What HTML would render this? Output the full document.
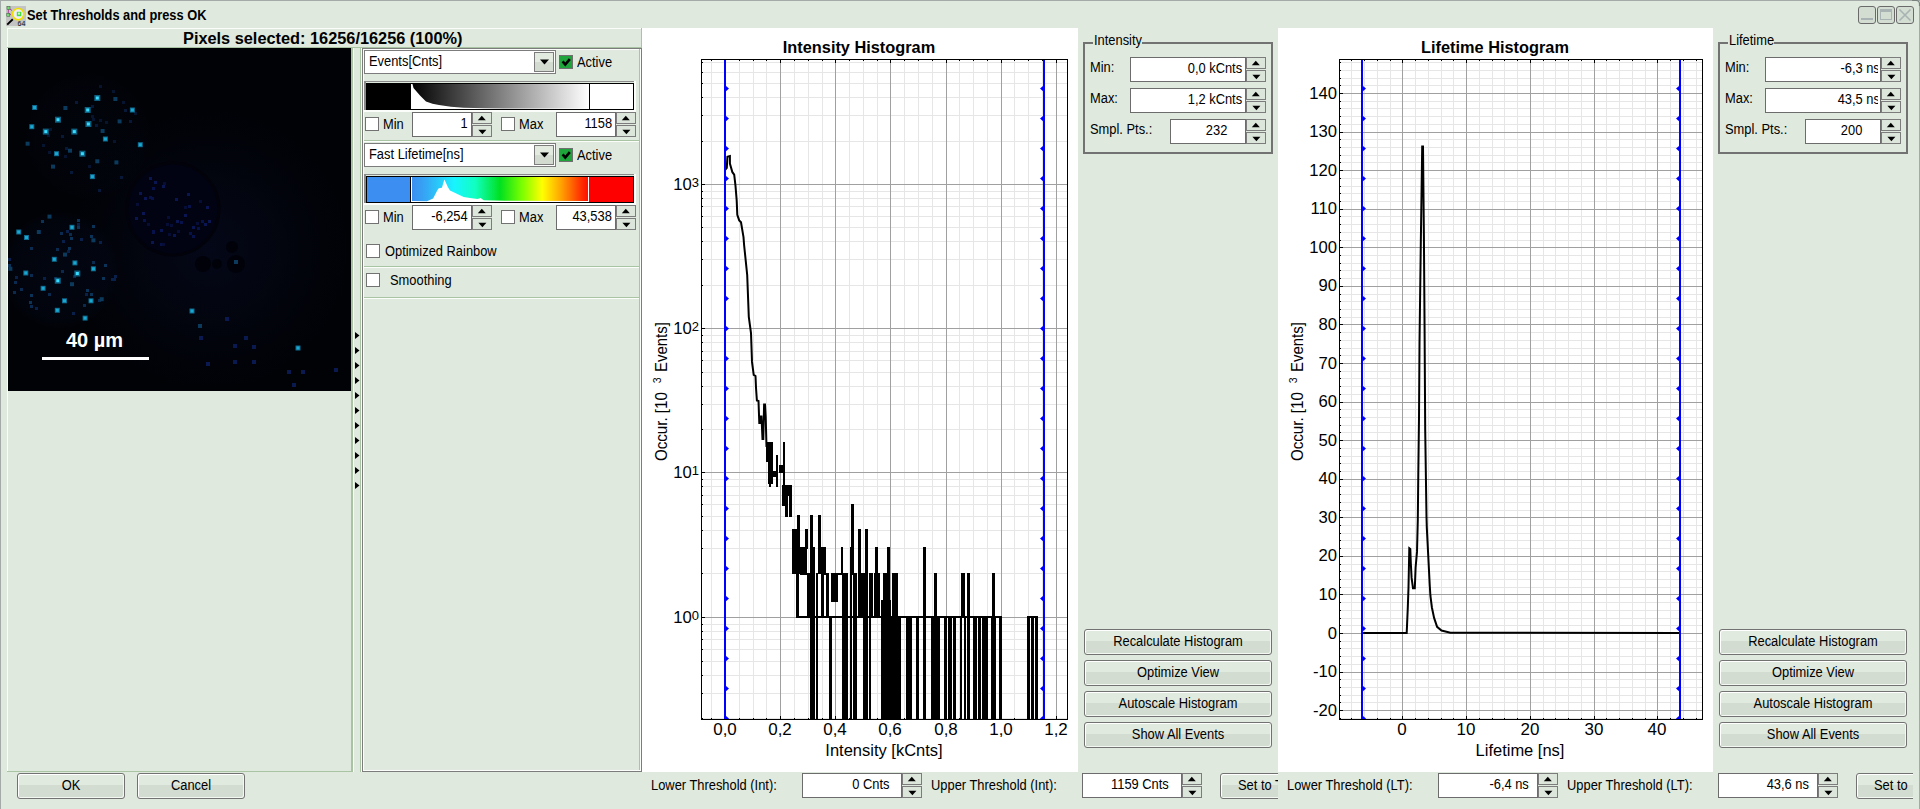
<!DOCTYPE html><html><head><meta charset="utf-8"><style>
html,body{margin:0;padding:0;width:1920px;height:809px;overflow:hidden;background:#dfe9de;font-family:'Liberation Sans', sans-serif;}
body{position:relative}
</style></head><body>
<div style="position:absolute;left:0px;top:0px;width:1920px;height:1px;background:#a3aaa7;"></div>
<div style="position:absolute;left:0px;top:0px;width:1px;height:809px;background:#a3aaa7;"></div>
<div style="position:absolute;left:1919px;top:4px;width:1px;height:805px;background:#a3aaa7;"></div>
<svg style="position:absolute;left:1912px;top:0" width="8" height="6"><path d="M0 0.5 H4 Q7.5 0.5 7.5 4 V6" stroke="#7a8280" stroke-width="1.2" fill="none"/></svg>
<svg style="position:absolute;left:6px;top:6px" width="20" height="20" viewBox="0 0 20 20">
<rect x="0" y="0" width="20" height="20" fill="#c4c4c4"/>
<path d="M2.5 2 L2.2 8.8 M2.5 2 L6 4.5 M2.2 8.8 L5 8.4 M7.6 10.3 L12.5 7.8" stroke="#b0309a" stroke-width="0.9" fill="none"/>
<rect x="1" y="0.6" width="3" height="3" fill="#70e070" stroke="#3a5a3a" stroke-width="0.5"/>
<rect x="0.8" y="7.3" width="3" height="3" fill="#70e070" stroke="#3a5a3a" stroke-width="0.5"/>
<line x1="1.2" y1="18.6" x2="6.8" y2="13.2" stroke="#000" stroke-width="1.9"/>
<circle cx="12.2" cy="8.1" r="5.6" fill="#f0eef4" stroke="#f0e000" stroke-width="1.6"/>
<rect x="10.8" y="5.8" width="4.4" height="4.4" fill="#40e040"/>
<rect x="12" y="6.6" width="2" height="2" fill="#c8f8c8"/>
<text x="11.6" y="19.8" font-size="7" font-family="Liberation Sans" fill="#111">64</text>
</svg>
<div style="position:absolute;left:27px;top:7.00px;white-space:pre;line-height:1;font:bold 14px 'Liberation Sans', sans-serif;color:#000;transform:scaleX(0.915);transform-origin:0 0;">Set Thresholds and press OK</div>
<div style="position:absolute;left:1858px;top:6px;width:18px;height:18px;box-sizing:border-box;border:1.5px solid #6a6a6a;border-radius:3px;background:#d3ddd1;"></div>
<div style="position:absolute;left:1877px;top:6px;width:18px;height:18px;box-sizing:border-box;border:1.5px solid #6a6a6a;border-radius:3px;background:#d3ddd1;"></div>
<div style="position:absolute;left:1896px;top:6px;width:18px;height:18px;box-sizing:border-box;border:1.5px solid #6a6a6a;border-radius:3px;background:#d3ddd1;"></div>
<div style="position:absolute;left:1861px;top:18px;width:12px;height:2px;background:#a9b3b3;"></div>
<div style="position:absolute;left:1880px;top:9px;width:12px;height:11px;box-sizing:border-box;border:1px solid #a9b3b3;border-top-width:3px;"></div>
<svg style="position:absolute;left:1896px;top:6px" width="18" height="18"><path d="M3.5 3.5 L14.5 14.5 M14.5 3.5 L3.5 14.5" stroke="#a9b3b3" stroke-width="1.6"/></svg>
<div style="position:absolute;left:7px;top:28px;width:634px;height:1px;background:#fbfdfb;"></div>
<div style="position:absolute;left:7px;top:28px;width:1px;height:20px;background:#fbfdfb;"></div>
<div style="position:absolute;left:7px;top:47px;width:635px;height:1px;background:#a9c4a2;"></div>
<div style="position:absolute;left:641px;top:28px;width:1px;height:20px;background:#a9c4a2;"></div>
<div style="position:absolute;left:183px;top:30.29px;white-space:pre;line-height:1;font:bold 16px 'Liberation Sans', sans-serif;color:#000;transform:scaleX(1.02);transform-origin:0 0;">Pixels selected: 16256/16256 (100%)</div>
<div style="position:absolute;left:351px;top:48px;width:2px;height:724px;background:#a9c4a2;"></div>
<div style="position:absolute;left:7px;top:771px;width:346px;height:1px;background:#a9c4a2;"></div>
<div style="position:absolute;left:7px;top:48px;width:1px;height:723px;background:#fbfdfb;"></div>
<svg style="position:absolute;left:8px;top:48px" width="343" height="343">
<defs><radialGradient id="g1" cx="0.5" cy="0.5" r="0.5"><stop offset="0" stop-color="#040717"/><stop offset="1" stop-color="#010206"/></radialGradient><radialGradient id="g2" cx="0.5" cy="0.5" r="0.5"><stop offset="0" stop-color="#06102a"/><stop offset="0.85" stop-color="#040a1c"/><stop offset="1" stop-color="#02040c"/></radialGradient></defs>
<rect width="343" height="343" fill="#010206"/>
<rect x="60" y="60" width="283" height="283" fill="url(#g1)"/>
<circle cx="80" cy="88" r="62" fill="url(#g2)" opacity="0.15"/>
<circle cx="52" cy="222" r="58" fill="url(#g2)" opacity="0.3"/>
<circle cx="165" cy="161" r="46" fill="#020312" stroke="#01020a" stroke-width="3"/>
<circle cx="195" cy="216" r="8" fill="#010209"/>
<circle cx="228" cy="216" r="9" fill="#010209"/>
<circle cx="224" cy="199" r="6" fill="#010209"/>
<circle cx="209" cy="216" r="5" fill="#010209"/>
<rect x="158" y="175" width="3" height="3" fill="#060e38"/>
<rect x="200" y="172" width="3" height="3" fill="#08124a"/>
<rect x="159" y="168" width="3" height="3" fill="#060e38"/>
<rect x="168" y="172" width="3" height="3" fill="#0a1652"/>
<rect x="176" y="166" width="3" height="3" fill="#0a1652"/>
<rect x="193" y="172" width="3" height="3" fill="#08124a"/>
<rect x="144" y="139" width="3" height="3" fill="#08124a"/>
<rect x="143" y="149" width="3" height="3" fill="#08124a"/>
<rect x="200" y="172" width="3" height="3" fill="#0a1652"/>
<rect x="139" y="175" width="3" height="3" fill="#060e38"/>
<rect x="152" y="195" width="3" height="3" fill="#08124a"/>
<rect x="189" y="179" width="3" height="3" fill="#08124a"/>
<rect x="144" y="182" width="3" height="3" fill="#08124a"/>
<rect x="136" y="149" width="3" height="3" fill="#0a1652"/>
<rect x="154" y="137" width="3" height="3" fill="#0a1652"/>
<rect x="127" y="169" width="3" height="3" fill="#0a1652"/>
<rect x="154" y="195" width="3" height="3" fill="#060e38"/>
<rect x="167" y="150" width="3" height="3" fill="#0a1652"/>
<rect x="128" y="155" width="3" height="3" fill="#060e38"/>
<rect x="135" y="171" width="3" height="3" fill="#08124a"/>
<rect x="184" y="178" width="3" height="3" fill="#0a1652"/>
<rect x="181" y="184" width="3" height="3" fill="#08124a"/>
<rect x="176" y="158" width="3" height="3" fill="#060e38"/>
<rect x="131" y="144" width="3" height="3" fill="#0a1652"/>
<rect x="152" y="181" width="3" height="3" fill="#0a1652"/>
<rect x="141" y="148" width="3" height="3" fill="#08124a"/>
<rect x="191" y="152" width="3" height="3" fill="#060e38"/>
<rect x="196" y="175" width="3" height="3" fill="#0a1652"/>
<rect x="141" y="129" width="3" height="3" fill="#0a1652"/>
<rect x="160" y="185" width="3" height="3" fill="#060e38"/>
<rect x="143" y="193" width="3" height="3" fill="#0a1652"/>
<rect x="172" y="173" width="3" height="3" fill="#08124a"/>
<rect x="169" y="182" width="3" height="3" fill="#060e38"/>
<rect x="165" y="186" width="3" height="3" fill="#0a1652"/>
<rect x="188" y="174" width="3" height="3" fill="#060e38"/>
<rect x="162" y="176" width="3" height="3" fill="#0a1652"/>
<rect x="179" y="145" width="3" height="3" fill="#0a1652"/>
<rect x="198" y="158" width="3" height="3" fill="#0a1652"/>
<rect x="180" y="157" width="3" height="3" fill="#08124a"/>
<rect x="184" y="187" width="3" height="3" fill="#08124a"/>
<rect x="134" y="164" width="3" height="3" fill="#0a1652"/>
<rect x="162" y="176" width="3" height="3" fill="#060e38"/>
<rect x="144" y="183" width="3" height="3" fill="#08124a"/>
<rect x="155" y="134" width="3" height="3" fill="#060e38"/>
<rect x="146" y="133" width="3" height="3" fill="#0a1652"/>
<rect x="91" y="193" width="3" height="3" fill="#08204a"/>
<rect x="62" y="189" width="3" height="3" fill="#0b3358"/>
<rect x="22" y="246" width="3" height="3" fill="#0b3358"/>
<rect x="65" y="227" width="3" height="3" fill="#0a2a50"/>
<rect x="35" y="229" width="3" height="3" fill="#08204a"/>
<rect x="53" y="222" width="3" height="3" fill="#0a2a50"/>
<rect x="-0" y="210" width="3" height="3" fill="#08204a"/>
<rect x="103" y="230" width="3" height="3" fill="#08204a"/>
<rect x="21" y="253" width="3" height="3" fill="#0b3358"/>
<rect x="22" y="199" width="3" height="3" fill="#0a2a50"/>
<rect x="84" y="177" width="3" height="3" fill="#0b3358"/>
<rect x="22" y="226" width="3" height="3" fill="#0a2a50"/>
<rect x="78" y="241" width="3" height="3" fill="#0b3358"/>
<rect x="7" y="228" width="3" height="3" fill="#08204a"/>
<rect x="105" y="230" width="3" height="3" fill="#08204a"/>
<rect x="22" y="257" width="3" height="3" fill="#0a2a50"/>
<rect x="54" y="192" width="3" height="3" fill="#08204a"/>
<rect x="82" y="187" width="3" height="3" fill="#0b3358"/>
<rect x="-0" y="216" width="3" height="3" fill="#0b3358"/>
<rect x="58" y="182" width="3" height="3" fill="#08204a"/>
<rect x="40" y="245" width="3" height="3" fill="#0a2a50"/>
<rect x="69" y="175" width="3" height="3" fill="#08204a"/>
<rect x="60" y="199" width="3" height="3" fill="#0b3358"/>
<rect x="46" y="229" width="3" height="3" fill="#0a2a50"/>
<rect x="61" y="185" width="3" height="3" fill="#0a2a50"/>
<rect x="33" y="172" width="3" height="3" fill="#0b3358"/>
<rect x="69" y="178" width="3" height="3" fill="#0b3358"/>
<rect x="84" y="213" width="3" height="3" fill="#0a2a50"/>
<rect x="82" y="245" width="3" height="3" fill="#0b3358"/>
<rect x="64" y="264" width="3" height="3" fill="#08204a"/>
<rect x="72" y="190" width="3" height="3" fill="#08204a"/>
<rect x="27" y="259" width="3" height="3" fill="#08204a"/>
<rect x="77" y="245" width="3" height="3" fill="#08204a"/>
<rect x="52" y="184" width="3" height="3" fill="#0a2a50"/>
<rect x="12" y="240" width="3" height="3" fill="#0a2a50"/>
<rect x="69" y="171" width="3" height="3" fill="#0b3358"/>
<rect x="6" y="233" width="3" height="3" fill="#0a2a50"/>
<rect x="48" y="200" width="3" height="3" fill="#0a2a50"/>
<rect x="94" y="229" width="3" height="3" fill="#0b3358"/>
<rect x="59" y="202" width="3" height="3" fill="#08204a"/>
<rect x="96" y="216" width="3" height="3" fill="#0b3358"/>
<rect x="75" y="256" width="3" height="3" fill="#0a2a50"/>
<rect x="106" y="227" width="3" height="3" fill="#08204a"/>
<rect x="90" y="251" width="3" height="3" fill="#0a2a50"/>
<rect x="5" y="243" width="3" height="3" fill="#0a2a50"/>
<rect x="105" y="92" width="3" height="3" fill="#061430"/>
<rect x="83" y="57" width="3" height="3" fill="#081838"/>
<rect x="87" y="76" width="3" height="3" fill="#081838"/>
<rect x="116" y="61" width="3" height="3" fill="#081838"/>
<rect x="104" y="42" width="3" height="3" fill="#061430"/>
<rect x="41" y="80" width="3" height="3" fill="#061430"/>
<rect x="114" y="53" width="3" height="3" fill="#061430"/>
<rect x="83" y="67" width="3" height="3" fill="#061430"/>
<rect x="34" y="96" width="3" height="3" fill="#061430"/>
<rect x="62" y="123" width="3" height="3" fill="#081838"/>
<rect x="84" y="70" width="3" height="3" fill="#061430"/>
<rect x="80" y="117" width="3" height="3" fill="#061430"/>
<rect x="39" y="86" width="3" height="3" fill="#061430"/>
<rect x="40" y="103" width="3" height="3" fill="#061430"/>
<rect x="67" y="53" width="3" height="3" fill="#081838"/>
<rect x="53" y="87" width="3" height="3" fill="#081838"/>
<rect x="126" y="64" width="3" height="3" fill="#061430"/>
<rect x="91" y="71" width="3" height="3" fill="#061430"/>
<rect x="56" y="107" width="3" height="3" fill="#061430"/>
<rect x="57" y="99" width="3" height="3" fill="#081838"/>
<rect x="91" y="37" width="3" height="3" fill="#061430"/>
<rect x="121" y="72" width="3" height="3" fill="#081838"/>
<rect x="112" y="128" width="3" height="3" fill="#081838"/>
<rect x="90" y="141" width="3" height="3" fill="#081838"/>
<rect x="97" y="73" width="3" height="3" fill="#061430"/>
<rect x="225" y="296" width="4" height="4" fill="#0a1a50"/>
<rect x="236" y="288" width="4" height="4" fill="#0a1a50"/>
<rect x="217" y="269" width="4" height="4" fill="#0a1a50"/>
<rect x="191" y="288" width="4" height="4" fill="#0a1a50"/>
<rect x="198" y="314" width="4" height="4" fill="#0a1a50"/>
<rect x="225" y="312" width="4" height="4" fill="#0a1a50"/>
<rect x="244" y="312" width="4" height="4" fill="#0a1a50"/>
<rect x="279" y="322" width="4" height="4" fill="#0a1a50"/>
<rect x="293" y="322" width="4" height="4" fill="#0a1a50"/>
<rect x="326" y="320" width="4" height="4" fill="#0a1a50"/>
<rect x="284" y="335" width="4" height="4" fill="#0a1a50"/>
<rect x="244" y="297" width="4" height="4" fill="#0a1a50"/>
<rect x="86.3" y="47.0" width="6" height="6" fill="#0d5f80"/>
<rect x="87.8" y="48.5" width="3" height="3" fill="#38dcff"/>
<rect x="105.4" y="49.0" width="4" height="4" fill="#0b3a5c"/>
<rect x="24.1" y="57.0" width="5" height="5" fill="#0e6a90"/>
<rect x="25.1" y="58.0" width="3" height="3" fill="#1aa8d0"/>
<rect x="55.4" y="58.0" width="4" height="4" fill="#0b3a5c"/>
<rect x="76.7" y="59.0" width="6" height="6" fill="#0d5f80"/>
<rect x="78.2" y="60.5" width="3" height="3" fill="#38dcff"/>
<rect x="121.9" y="59.5" width="5" height="5" fill="#0e6a90"/>
<rect x="122.9" y="60.5" width="3" height="3" fill="#1aa8d0"/>
<rect x="47.0" y="68.7" width="6" height="6" fill="#0d5f80"/>
<rect x="48.5" y="70.2" width="3" height="3" fill="#38dcff"/>
<rect x="77.4" y="73.0" width="6" height="6" fill="#0d5f80"/>
<rect x="78.9" y="74.5" width="3" height="3" fill="#38dcff"/>
<rect x="109.6" y="71.4" width="4" height="4" fill="#0b3a5c"/>
<rect x="21.3" y="76.2" width="5" height="5" fill="#0e6a90"/>
<rect x="22.3" y="77.2" width="3" height="3" fill="#1aa8d0"/>
<rect x="34.8" y="80.6" width="6" height="6" fill="#0d5f80"/>
<rect x="36.3" y="82.1" width="3" height="3" fill="#38dcff"/>
<rect x="63.3" y="80.6" width="6" height="6" fill="#0d5f80"/>
<rect x="64.8" y="82.1" width="3" height="3" fill="#38dcff"/>
<rect x="92.6" y="81.0" width="4" height="4" fill="#0b3a5c"/>
<rect x="94.9" y="88.5" width="5" height="5" fill="#0e6a90"/>
<rect x="95.9" y="89.5" width="3" height="3" fill="#1aa8d0"/>
<rect x="17.6" y="93.7" width="4" height="4" fill="#0b3a5c"/>
<rect x="129.8" y="94.2" width="5" height="5" fill="#0e6a90"/>
<rect x="130.8" y="95.2" width="3" height="3" fill="#1aa8d0"/>
<rect x="46.0" y="103.2" width="5" height="5" fill="#0e6a90"/>
<rect x="47.0" y="104.2" width="3" height="3" fill="#1aa8d0"/>
<rect x="60.0" y="100.7" width="4" height="4" fill="#0b3a5c"/>
<rect x="71.4" y="102.7" width="6" height="6" fill="#0d5f80"/>
<rect x="72.9" y="104.2" width="3" height="3" fill="#38dcff"/>
<rect x="87.3" y="111.3" width="4" height="4" fill="#0b3a5c"/>
<rect x="106.4" y="112.4" width="4" height="4" fill="#0b3a5c"/>
<rect x="43.0" y="116.6" width="4" height="4" fill="#0b3a5c"/>
<rect x="81.9" y="126.1" width="5" height="5" fill="#0e6a90"/>
<rect x="82.9" y="127.1" width="3" height="3" fill="#1aa8d0"/>
<rect x="8.2" y="181.5" width="5" height="5" fill="#0e6a90"/>
<rect x="9.2" y="182.5" width="3" height="3" fill="#1aa8d0"/>
<rect x="16.0" y="187.0" width="5" height="5" fill="#0e6a90"/>
<rect x="17.0" y="188.0" width="3" height="3" fill="#1aa8d0"/>
<rect x="61.5" y="176.8" width="5" height="5" fill="#0e6a90"/>
<rect x="62.5" y="177.8" width="3" height="3" fill="#1aa8d0"/>
<rect x="39.5" y="166.6" width="4" height="4" fill="#0b3a5c"/>
<rect x="28.8" y="182.0" width="4" height="4" fill="#0b3a5c"/>
<rect x="83.4" y="190.3" width="4" height="4" fill="#0b3a5c"/>
<rect x="43.8" y="208.8" width="5" height="5" fill="#0e6a90"/>
<rect x="44.8" y="209.8" width="3" height="3" fill="#1aa8d0"/>
<rect x="64.4" y="212.4" width="5" height="5" fill="#0e6a90"/>
<rect x="65.4" y="213.4" width="3" height="3" fill="#1aa8d0"/>
<rect x="82.9" y="218.3" width="5" height="5" fill="#0e6a90"/>
<rect x="83.9" y="219.3" width="3" height="3" fill="#1aa8d0"/>
<rect x="0.4" y="218.8" width="4" height="4" fill="#0b3a5c"/>
<rect x="15.3" y="222.5" width="5" height="5" fill="#0e6a90"/>
<rect x="16.3" y="223.5" width="3" height="3" fill="#1aa8d0"/>
<rect x="66.3" y="222.5" width="6" height="6" fill="#0d5f80"/>
<rect x="67.8" y="224.0" width="3" height="3" fill="#38dcff"/>
<rect x="46.8" y="229.7" width="6" height="6" fill="#0d5f80"/>
<rect x="48.3" y="231.2" width="3" height="3" fill="#38dcff"/>
<rect x="32.6" y="237.8" width="5" height="5" fill="#0e6a90"/>
<rect x="33.6" y="238.8" width="3" height="3" fill="#1aa8d0"/>
<rect x="62.0" y="234.2" width="4" height="4" fill="#0b3a5c"/>
<rect x="54.0" y="250.3" width="5" height="5" fill="#0e6a90"/>
<rect x="55.0" y="251.3" width="3" height="3" fill="#1aa8d0"/>
<rect x="80.5" y="250.3" width="5" height="5" fill="#0e6a90"/>
<rect x="81.5" y="251.3" width="3" height="3" fill="#1aa8d0"/>
<rect x="91.7" y="249.2" width="4" height="4" fill="#0b3a5c"/>
<rect x="46.8" y="259.8" width="5" height="5" fill="#0e6a90"/>
<rect x="47.8" y="260.8" width="3" height="3" fill="#1aa8d0"/>
<rect x="74.6" y="267.6" width="5" height="5" fill="#0e6a90"/>
<rect x="75.6" y="268.6" width="3" height="3" fill="#1aa8d0"/>
<rect x="55.0" y="204.6" width="4" height="4" fill="#0b3a5c"/>
<rect x="181.5" y="260.5" width="5" height="5" fill="#0e6a90"/>
<rect x="182.5" y="261.5" width="3" height="3" fill="#1aa8d0"/>
<rect x="287.5" y="297.5" width="5" height="5" fill="#0e6a90"/>
<rect x="288.5" y="298.5" width="3" height="3" fill="#1aa8d0"/>
<rect x="226.0" y="212.0" width="4" height="4" fill="#0b3a5c"/>
<rect x="190.0" y="276.0" width="4" height="4" fill="#0b3a5c"/>
</svg>
<div style="position:absolute;left:66px;top:329.36px;white-space:pre;line-height:1;font:bold 20px 'Liberation Sans', sans-serif;color:#fff;transform:scaleX(1.0);transform-origin:0 0;">40 µm</div>
<div style="position:absolute;left:42px;top:357px;width:107px;height:3px;background:#fff;"></div>
<div style="position:absolute;left:353px;top:48px;width:1px;height:724px;background:#fbfdfb;"></div>
<div style="position:absolute;left:360px;top:48px;width:1px;height:724px;background:#a9c4a2;"></div>
<div style="position:absolute;left:361px;top:48px;width:1px;height:724px;background:#fbfdfb;"></div>
<div style="position:absolute;left:362px;top:48px;width:1px;height:724px;background:#7c7c7c;"></div>
<div style="position:absolute;left:363px;top:49px;width:1px;height:722px;background:#fbfdfb;"></div>
<svg style="position:absolute;left:355px;top:332px" width="5" height="8"><path d="M0 0 L4.5 3.5 L0 7 Z" fill="#000"/></svg>
<svg style="position:absolute;left:355px;top:347px" width="5" height="8"><path d="M0 0 L4.5 3.5 L0 7 Z" fill="#000"/></svg>
<svg style="position:absolute;left:355px;top:362px" width="5" height="8"><path d="M0 0 L4.5 3.5 L0 7 Z" fill="#000"/></svg>
<svg style="position:absolute;left:355px;top:377px" width="5" height="8"><path d="M0 0 L4.5 3.5 L0 7 Z" fill="#000"/></svg>
<svg style="position:absolute;left:355px;top:392px" width="5" height="8"><path d="M0 0 L4.5 3.5 L0 7 Z" fill="#000"/></svg>
<svg style="position:absolute;left:355px;top:407px" width="5" height="8"><path d="M0 0 L4.5 3.5 L0 7 Z" fill="#000"/></svg>
<svg style="position:absolute;left:355px;top:422px" width="5" height="8"><path d="M0 0 L4.5 3.5 L0 7 Z" fill="#000"/></svg>
<svg style="position:absolute;left:355px;top:437px" width="5" height="8"><path d="M0 0 L4.5 3.5 L0 7 Z" fill="#000"/></svg>
<svg style="position:absolute;left:355px;top:452px" width="5" height="8"><path d="M0 0 L4.5 3.5 L0 7 Z" fill="#000"/></svg>
<svg style="position:absolute;left:355px;top:467px" width="5" height="8"><path d="M0 0 L4.5 3.5 L0 7 Z" fill="#000"/></svg>
<svg style="position:absolute;left:355px;top:482px" width="5" height="8"><path d="M0 0 L4.5 3.5 L0 7 Z" fill="#000"/></svg>
<div style="position:absolute;left:362px;top:48px;width:280px;height:1px;background:#7c7c7c;"></div>
<div style="position:absolute;left:363px;top:49px;width:278px;height:1px;background:#fbfdfb;"></div>
<div style="position:absolute;left:639px;top:49px;width:1px;height:722px;background:#a9c4a2;"></div>
<div style="position:absolute;left:641px;top:48px;width:1px;height:724px;background:#7c7c7c;"></div>
<div style="position:absolute;left:640px;top:49px;width:1px;height:722px;background:#fbfdfb;"></div>
<div style="position:absolute;left:362px;top:771px;width:280px;height:1px;background:#7c7c7c;"></div>
<div style="position:absolute;left:363px;top:770px;width:278px;height:1px;background:#fbfdfb;"></div>
<div style="position:absolute;left:364px;top:50px;width:192px;height:24px;box-sizing:border-box;border:1px solid #7c7c7c;background:#fff;"></div>
<div style="position:absolute;left:369px;top:53.00px;white-space:pre;line-height:1;font:normal 14px 'Liberation Sans', sans-serif;color:#000;transform:scaleX(0.92);transform-origin:0 0;">Events[Cnts]</div>
<div style="position:absolute;left:534px;top:52px;width:20px;height:20px;box-sizing:border-box;border:1px solid #7c7c7c;background:linear-gradient(#e3ebe1 0,#e3ebe1 50%,#d3dbd1 50%);"></div>
<svg style="position:absolute;left:534px;top:52px" width="20" height="20"><path d="M6 7.5 L15 7.5 L10.5 12.5 Z" fill="#000"/></svg>
<div style="position:absolute;left:559px;top:55px;width:14px;height:14px;box-sizing:border-box;border:1px solid #6f6f6f;background:#1fa33b;"></div>
<svg style="position:absolute;left:559px;top:55px" width="14" height="14"><path d="M3.6 6.4 L6.3 9.6 L10.8 4.2" stroke="#000" stroke-width="2.6" fill="none"/></svg>
<div style="position:absolute;left:577px;top:54.00px;white-space:pre;line-height:1;font:normal 14px 'Liberation Sans', sans-serif;color:#000;transform:scaleX(0.92);transform-origin:0 0;">Active</div>
<svg style="position:absolute;left:364px;top:81px" width="272" height="31">
<defs><linearGradient id="gr" x1="0" x2="1"><stop offset="0" stop-color="#000"/><stop offset="1" stop-color="#fff"/></linearGradient></defs>
<rect x="0" y="0" width="270" height="1" fill="#8a8a8a"/>
<rect x="0" y="0" width="2" height="29" fill="#8a8a8a"/>
<rect x="0" y="29" width="272" height="2" fill="#fbfdfb"/>
<rect x="270" y="0" width="2" height="31" fill="#fbfdfb"/>
<rect x="2" y="2" width="268" height="27" fill="#000"/>
<rect x="47" y="3" width="178" height="25" fill="url(#gr)"/>
<rect x="226" y="3" width="43" height="25" fill="#fff"/>
<path d="M47 28 L47 3 L48.5 3 L49.5 7 L56 14.5 L62 20.5 L68.5 22.7 L75 24 L87 25.7 L99.5 26.7 L120 27.3 L140 27.5 L225 27.6 L225 28 Z" fill="#fff"/>
<rect x="225" y="3" width="1" height="25" fill="#000"/>
</svg>
<div style="position:absolute;left:365px;top:117px;width:14px;height:14px;box-sizing:border-box;border:1px solid #727272;background:#fff;"></div>
<div style="position:absolute;left:383px;top:116.00px;white-space:pre;line-height:1;font:normal 14px 'Liberation Sans', sans-serif;color:#000;transform:scaleX(0.92);transform-origin:0 0;">Min</div>
<div style="position:absolute;left:412px;top:112px;width:60px;height:25px;box-sizing:border-box;border:1px solid #6c6c6c;background:#fff;"></div>
<div style="position:absolute;right:1452px;top:115.00px;white-space:pre;line-height:1;font:normal 14px 'Liberation Sans', sans-serif;color:#000;transform:scaleX(0.92);transform-origin:100% 0;">1</div>
<div style="position:absolute;left:472px;top:112px;width:20px;height:12px;box-sizing:border-box;border:1px solid #7c7c7c;background:#dde6db;"></div>
<svg style="position:absolute;left:472px;top:112px" width="20" height="12"><path d="M5.8 8.2 L13.8 8.2 L9.8 3.8 Z" fill="#000"/></svg>
<div style="position:absolute;left:472px;top:125px;width:20px;height:12px;box-sizing:border-box;border:1px solid #7c7c7c;background:#dde6db;"></div>
<svg style="position:absolute;left:472px;top:125px" width="20" height="12"><path d="M6.4 4.8 L14.4 4.8 L10.4 9.2 Z" fill="#000"/></svg>
<div style="position:absolute;left:501px;top:117px;width:14px;height:14px;box-sizing:border-box;border:1px solid #727272;background:#fff;"></div>
<div style="position:absolute;left:519px;top:116.00px;white-space:pre;line-height:1;font:normal 14px 'Liberation Sans', sans-serif;color:#000;transform:scaleX(0.92);transform-origin:0 0;">Max</div>
<div style="position:absolute;left:556px;top:112px;width:60px;height:25px;box-sizing:border-box;border:1px solid #6c6c6c;background:#fff;"></div>
<div style="position:absolute;right:1308px;top:115.00px;white-space:pre;line-height:1;font:normal 14px 'Liberation Sans', sans-serif;color:#000;transform:scaleX(0.92);transform-origin:100% 0;">1158</div>
<div style="position:absolute;left:616px;top:112px;width:20px;height:12px;box-sizing:border-box;border:1px solid #7c7c7c;background:#dde6db;"></div>
<svg style="position:absolute;left:616px;top:112px" width="20" height="12"><path d="M5.8 8.2 L13.8 8.2 L9.8 3.8 Z" fill="#000"/></svg>
<div style="position:absolute;left:616px;top:125px;width:20px;height:12px;box-sizing:border-box;border:1px solid #7c7c7c;background:#dde6db;"></div>
<svg style="position:absolute;left:616px;top:125px" width="20" height="12"><path d="M6.4 4.8 L14.4 4.8 L10.4 9.2 Z" fill="#000"/></svg>
<div style="position:absolute;left:364px;top:140px;width:275px;height:1px;background:#a9c4a2;"></div>
<div style="position:absolute;left:364px;top:141px;width:275px;height:1px;background:#fbfdfb;"></div>
<div style="position:absolute;left:364px;top:143px;width:192px;height:24px;box-sizing:border-box;border:1px solid #7c7c7c;background:#fff;"></div>
<div style="position:absolute;left:369px;top:146.00px;white-space:pre;line-height:1;font:normal 14px 'Liberation Sans', sans-serif;color:#000;transform:scaleX(0.92);transform-origin:0 0;">Fast Lifetime[ns]</div>
<div style="position:absolute;left:534px;top:145px;width:20px;height:20px;box-sizing:border-box;border:1px solid #7c7c7c;background:linear-gradient(#e3ebe1 0,#e3ebe1 50%,#d3dbd1 50%);"></div>
<svg style="position:absolute;left:534px;top:145px" width="20" height="20"><path d="M6 7.5 L15 7.5 L10.5 12.5 Z" fill="#000"/></svg>
<div style="position:absolute;left:559px;top:148px;width:14px;height:14px;box-sizing:border-box;border:1px solid #6f6f6f;background:#1fa33b;"></div>
<svg style="position:absolute;left:559px;top:148px" width="14" height="14"><path d="M3.6 6.4 L6.3 9.6 L10.8 4.2" stroke="#000" stroke-width="2.6" fill="none"/></svg>
<div style="position:absolute;left:577px;top:147.00px;white-space:pre;line-height:1;font:normal 14px 'Liberation Sans', sans-serif;color:#000;transform:scaleX(0.92);transform-origin:0 0;">Active</div>
<svg style="position:absolute;left:364px;top:174px" width="272" height="31">
<defs><linearGradient id="rb" x1="0" x2="1"><stop offset="0" stop-color="#3c8ef0"/><stop offset="0.08" stop-color="#35a8f5"/><stop offset="0.24" stop-color="#18f4ff"/><stop offset="0.36" stop-color="#10ffc0"/><stop offset="0.5" stop-color="#00e020"/><stop offset="0.63" stop-color="#80ff00"/><stop offset="0.74" stop-color="#ffff00"/><stop offset="0.85" stop-color="#ffa000"/><stop offset="0.96" stop-color="#ff3000"/><stop offset="1" stop-color="#ff1000"/></linearGradient></defs>
<rect x="0" y="0" width="270" height="1" fill="#8a8a8a"/>
<rect x="0" y="0" width="2" height="29" fill="#8a8a8a"/>
<rect x="0" y="29" width="272" height="2" fill="#fbfdfb"/>
<rect x="270" y="0" width="2" height="31" fill="#fbfdfb"/>
<rect x="2" y="2" width="268" height="27" fill="#000"/>
<rect x="3" y="3" width="43" height="25" fill="#3c8ef0"/>
<rect x="48" y="3" width="176" height="25" fill="url(#rb)"/>
<rect x="225" y="3" width="44" height="25" fill="#ff0000"/>
<path d="M48 28 L48 27 L62.9 27.2 L69.1 24.6 L73.5 16 L74.75 14.25 L77.9 13.75 L80.4 5.5 L84.1 13.4 L86 16.5 L92.25 19.6 L99.75 23 L106 24 L113.5 25 L116.6 24 L119.75 26.25 L141 26.75 L224 27 L224 28 Z" fill="#fff"/>
<rect x="47" y="3" width="1" height="25" fill="#fff"/>
<rect x="224" y="3" width="1" height="25" fill="#fff"/>
</svg>
<div style="position:absolute;left:365px;top:210px;width:14px;height:14px;box-sizing:border-box;border:1px solid #727272;background:#fff;"></div>
<div style="position:absolute;left:383px;top:209.00px;white-space:pre;line-height:1;font:normal 14px 'Liberation Sans', sans-serif;color:#000;transform:scaleX(0.92);transform-origin:0 0;">Min</div>
<div style="position:absolute;left:412px;top:205px;width:60px;height:25px;box-sizing:border-box;border:1px solid #6c6c6c;background:#fff;"></div>
<div style="position:absolute;right:1452px;top:208.00px;white-space:pre;line-height:1;font:normal 14px 'Liberation Sans', sans-serif;color:#000;transform:scaleX(0.92);transform-origin:100% 0;">-6,254</div>
<div style="position:absolute;left:472px;top:205px;width:20px;height:12px;box-sizing:border-box;border:1px solid #7c7c7c;background:#dde6db;"></div>
<svg style="position:absolute;left:472px;top:205px" width="20" height="12"><path d="M5.8 8.2 L13.8 8.2 L9.8 3.8 Z" fill="#000"/></svg>
<div style="position:absolute;left:472px;top:218px;width:20px;height:12px;box-sizing:border-box;border:1px solid #7c7c7c;background:#dde6db;"></div>
<svg style="position:absolute;left:472px;top:218px" width="20" height="12"><path d="M6.4 4.8 L14.4 4.8 L10.4 9.2 Z" fill="#000"/></svg>
<div style="position:absolute;left:501px;top:210px;width:14px;height:14px;box-sizing:border-box;border:1px solid #727272;background:#fff;"></div>
<div style="position:absolute;left:519px;top:209.00px;white-space:pre;line-height:1;font:normal 14px 'Liberation Sans', sans-serif;color:#000;transform:scaleX(0.92);transform-origin:0 0;">Max</div>
<div style="position:absolute;left:556px;top:205px;width:60px;height:25px;box-sizing:border-box;border:1px solid #6c6c6c;background:#fff;"></div>
<div style="position:absolute;right:1308px;top:208.00px;white-space:pre;line-height:1;font:normal 14px 'Liberation Sans', sans-serif;color:#000;transform:scaleX(0.92);transform-origin:100% 0;">43,538</div>
<div style="position:absolute;left:616px;top:205px;width:20px;height:12px;box-sizing:border-box;border:1px solid #7c7c7c;background:#dde6db;"></div>
<svg style="position:absolute;left:616px;top:205px" width="20" height="12"><path d="M5.8 8.2 L13.8 8.2 L9.8 3.8 Z" fill="#000"/></svg>
<div style="position:absolute;left:616px;top:218px;width:20px;height:12px;box-sizing:border-box;border:1px solid #7c7c7c;background:#dde6db;"></div>
<svg style="position:absolute;left:616px;top:218px" width="20" height="12"><path d="M6.4 4.8 L14.4 4.8 L10.4 9.2 Z" fill="#000"/></svg>
<div style="position:absolute;left:366px;top:244px;width:14px;height:14px;box-sizing:border-box;border:1px solid #727272;background:#fff;"></div>
<div style="position:absolute;left:385px;top:243.00px;white-space:pre;line-height:1;font:normal 14px 'Liberation Sans', sans-serif;color:#000;transform:scaleX(0.92);transform-origin:0 0;">Optimized Rainbow</div>
<div style="position:absolute;left:364px;top:266px;width:275px;height:1px;background:#a9c4a2;"></div>
<div style="position:absolute;left:364px;top:267px;width:275px;height:1px;background:#fbfdfb;"></div>
<div style="position:absolute;left:366px;top:273px;width:14px;height:14px;box-sizing:border-box;border:1px solid #727272;background:#fff;"></div>
<div style="position:absolute;left:390px;top:272.00px;white-space:pre;line-height:1;font:normal 14px 'Liberation Sans', sans-serif;color:#000;transform:scaleX(0.92);transform-origin:0 0;">Smoothing</div>
<div style="position:absolute;left:364px;top:297px;width:275px;height:1px;background:#a9c4a2;"></div>
<div style="position:absolute;left:364px;top:298px;width:275px;height:1px;background:#fbfdfb;"></div>
<div style="position:absolute;left:17px;top:773px;width:108px;height:26px;box-sizing:border-box;border:1px solid #727272;border-radius:3px;box-shadow:inset 1px 1px 0 #fff, inset -1px -1px 0 #f4f8f3;background:linear-gradient(#e1eadf 0,#e1eadf 45%,#d3dcd1 45%,#d3dcd1 100%);overflow:hidden"></div>
<div style="position:absolute;left:-129.0px;width:400px;text-align:center;top:777.00px;white-space:pre;line-height:1;font:normal 14px 'Liberation Sans', sans-serif;color:#000;transform:scaleX(0.92);transform-origin:50% 0;">OK</div>
<div style="position:absolute;left:137px;top:773px;width:108px;height:26px;box-sizing:border-box;border:1px solid #727272;border-radius:3px;box-shadow:inset 1px 1px 0 #fff, inset -1px -1px 0 #f4f8f3;background:linear-gradient(#e1eadf 0,#e1eadf 45%,#d3dcd1 45%,#d3dcd1 100%);overflow:hidden"></div>
<div style="position:absolute;left:-9.0px;width:400px;text-align:center;top:777.00px;white-space:pre;line-height:1;font:normal 14px 'Liberation Sans', sans-serif;color:#000;transform:scaleX(0.92);transform-origin:50% 0;">Cancel</div>
<div style="position:absolute;left:1083px;top:42px;width:190px;height:112px;box-sizing:border-box;border:2px solid #727272;"></div>
<div style="position:absolute;left:1093px;top:40px;width:49px;height:6px;background:#dfe9de;"></div>
<div style="position:absolute;left:1094px;top:32.00px;white-space:pre;line-height:1;font:normal 14px 'Liberation Sans', sans-serif;color:#000;transform:scaleX(0.92);transform-origin:0 0;">Intensity</div>
<div style="position:absolute;left:1090px;top:59.00px;white-space:pre;line-height:1;font:normal 14px 'Liberation Sans', sans-serif;color:#000;transform:scaleX(0.92);transform-origin:0 0;">Min:</div>
<div style="position:absolute;left:1090px;top:90.00px;white-space:pre;line-height:1;font:normal 14px 'Liberation Sans', sans-serif;color:#000;transform:scaleX(0.92);transform-origin:0 0;">Max:</div>
<div style="position:absolute;left:1090px;top:121.00px;white-space:pre;line-height:1;font:normal 14px 'Liberation Sans', sans-serif;color:#000;transform:scaleX(0.92);transform-origin:0 0;">Smpl. Pts.:</div>
<div style="position:absolute;left:1130px;top:57px;width:116px;height:25px;overflow:hidden">
<div style="position:absolute;left:0px;top:0px;width:116px;height:25px;box-sizing:border-box;border:1px solid #6c6c6c;background:#fff;"></div>
<div style="position:absolute;right:4px;top:3px;white-space:pre;line-height:1;font:14px 'Liberation Sans', sans-serif;color:#000;transform:scaleX(0.92);transform-origin:100% 0">0,0 kCnts</div>
<div style="position:absolute;right:1px;top:1px;width:2px;height:23px;background:#fff"></div>
<div style="position:absolute;right:0;top:0;width:1px;height:25px;background:#6c6c6c"></div>
</div>
<div style="position:absolute;left:1246px;top:57px;width:20px;height:12px;box-sizing:border-box;border:1px solid #7c7c7c;background:#dde6db;"></div>
<svg style="position:absolute;left:1246px;top:57px" width="20" height="12"><path d="M5.8 8.2 L13.8 8.2 L9.8 3.8 Z" fill="#000"/></svg>
<div style="position:absolute;left:1246px;top:70px;width:20px;height:12px;box-sizing:border-box;border:1px solid #7c7c7c;background:#dde6db;"></div>
<svg style="position:absolute;left:1246px;top:70px" width="20" height="12"><path d="M6.4 4.8 L14.4 4.8 L10.4 9.2 Z" fill="#000"/></svg>
<div style="position:absolute;left:1130px;top:88px;width:116px;height:25px;overflow:hidden">
<div style="position:absolute;left:0px;top:0px;width:116px;height:25px;box-sizing:border-box;border:1px solid #6c6c6c;background:#fff;"></div>
<div style="position:absolute;right:4px;top:3px;white-space:pre;line-height:1;font:14px 'Liberation Sans', sans-serif;color:#000;transform:scaleX(0.92);transform-origin:100% 0">1,2 kCnts</div>
<div style="position:absolute;right:1px;top:1px;width:2px;height:23px;background:#fff"></div>
<div style="position:absolute;right:0;top:0;width:1px;height:25px;background:#6c6c6c"></div>
</div>
<div style="position:absolute;left:1246px;top:88px;width:20px;height:12px;box-sizing:border-box;border:1px solid #7c7c7c;background:#dde6db;"></div>
<svg style="position:absolute;left:1246px;top:88px" width="20" height="12"><path d="M5.8 8.2 L13.8 8.2 L9.8 3.8 Z" fill="#000"/></svg>
<div style="position:absolute;left:1246px;top:101px;width:20px;height:12px;box-sizing:border-box;border:1px solid #7c7c7c;background:#dde6db;"></div>
<svg style="position:absolute;left:1246px;top:101px" width="20" height="12"><path d="M6.4 4.8 L14.4 4.8 L10.4 9.2 Z" fill="#000"/></svg>
<div style="position:absolute;left:1170px;top:119px;width:76px;height:25px;overflow:hidden">
<div style="position:absolute;left:0px;top:0px;width:76px;height:25px;box-sizing:border-box;border:1px solid #6c6c6c;background:#fff;"></div>
<div style="position:absolute;right:19px;top:3px;white-space:pre;line-height:1;font:14px 'Liberation Sans', sans-serif;color:#000;transform:scaleX(0.92);transform-origin:100% 0">232</div>
<div style="position:absolute;right:1px;top:1px;width:2px;height:23px;background:#fff"></div>
<div style="position:absolute;right:0;top:0;width:1px;height:25px;background:#6c6c6c"></div>
</div>
<div style="position:absolute;left:1246px;top:119px;width:20px;height:12px;box-sizing:border-box;border:1px solid #7c7c7c;background:#dde6db;"></div>
<svg style="position:absolute;left:1246px;top:119px" width="20" height="12"><path d="M5.8 8.2 L13.8 8.2 L9.8 3.8 Z" fill="#000"/></svg>
<div style="position:absolute;left:1246px;top:132px;width:20px;height:12px;box-sizing:border-box;border:1px solid #7c7c7c;background:#dde6db;"></div>
<svg style="position:absolute;left:1246px;top:132px" width="20" height="12"><path d="M6.4 4.8 L14.4 4.8 L10.4 9.2 Z" fill="#000"/></svg>
<div style="position:absolute;left:1084px;top:629px;width:188px;height:26px;box-sizing:border-box;border:1px solid #727272;border-radius:3px;box-shadow:inset 1px 1px 0 #fff, inset -1px -1px 0 #f4f8f3;background:linear-gradient(#e1eadf 0,#e1eadf 45%,#d3dcd1 45%,#d3dcd1 100%);overflow:hidden"></div>
<div style="position:absolute;left:978.0px;width:400px;text-align:center;top:633.00px;white-space:pre;line-height:1;font:normal 14px 'Liberation Sans', sans-serif;color:#000;transform:scaleX(0.92);transform-origin:50% 0;">Recalculate Histogram</div>
<div style="position:absolute;left:1084px;top:660px;width:188px;height:26px;box-sizing:border-box;border:1px solid #727272;border-radius:3px;box-shadow:inset 1px 1px 0 #fff, inset -1px -1px 0 #f4f8f3;background:linear-gradient(#e1eadf 0,#e1eadf 45%,#d3dcd1 45%,#d3dcd1 100%);overflow:hidden"></div>
<div style="position:absolute;left:978.0px;width:400px;text-align:center;top:664.00px;white-space:pre;line-height:1;font:normal 14px 'Liberation Sans', sans-serif;color:#000;transform:scaleX(0.92);transform-origin:50% 0;">Optimize View</div>
<div style="position:absolute;left:1084px;top:691px;width:188px;height:26px;box-sizing:border-box;border:1px solid #727272;border-radius:3px;box-shadow:inset 1px 1px 0 #fff, inset -1px -1px 0 #f4f8f3;background:linear-gradient(#e1eadf 0,#e1eadf 45%,#d3dcd1 45%,#d3dcd1 100%);overflow:hidden"></div>
<div style="position:absolute;left:978.0px;width:400px;text-align:center;top:695.00px;white-space:pre;line-height:1;font:normal 14px 'Liberation Sans', sans-serif;color:#000;transform:scaleX(0.92);transform-origin:50% 0;">Autoscale Histogram</div>
<div style="position:absolute;left:1084px;top:722px;width:188px;height:26px;box-sizing:border-box;border:1px solid #727272;border-radius:3px;box-shadow:inset 1px 1px 0 #fff, inset -1px -1px 0 #f4f8f3;background:linear-gradient(#e1eadf 0,#e1eadf 45%,#d3dcd1 45%,#d3dcd1 100%);overflow:hidden"></div>
<div style="position:absolute;left:978.0px;width:400px;text-align:center;top:726.00px;white-space:pre;line-height:1;font:normal 14px 'Liberation Sans', sans-serif;color:#000;transform:scaleX(0.92);transform-origin:50% 0;">Show All Events</div>
<div style="position:absolute;left:1718px;top:42px;width:190px;height:112px;box-sizing:border-box;border:2px solid #727272;"></div>
<div style="position:absolute;left:1728px;top:40px;width:46px;height:6px;background:#dfe9de;"></div>
<div style="position:absolute;left:1729px;top:32.00px;white-space:pre;line-height:1;font:normal 14px 'Liberation Sans', sans-serif;color:#000;transform:scaleX(0.92);transform-origin:0 0;">Lifetime</div>
<div style="position:absolute;left:1725px;top:59.00px;white-space:pre;line-height:1;font:normal 14px 'Liberation Sans', sans-serif;color:#000;transform:scaleX(0.92);transform-origin:0 0;">Min:</div>
<div style="position:absolute;left:1725px;top:90.00px;white-space:pre;line-height:1;font:normal 14px 'Liberation Sans', sans-serif;color:#000;transform:scaleX(0.92);transform-origin:0 0;">Max:</div>
<div style="position:absolute;left:1725px;top:121.00px;white-space:pre;line-height:1;font:normal 14px 'Liberation Sans', sans-serif;color:#000;transform:scaleX(0.92);transform-origin:0 0;">Smpl. Pts.:</div>
<div style="position:absolute;left:1765px;top:57px;width:116px;height:25px;overflow:hidden">
<div style="position:absolute;left:0px;top:0px;width:116px;height:25px;box-sizing:border-box;border:1px solid #6c6c6c;background:#fff;"></div>
<div style="position:absolute;right:1px;top:3px;white-space:pre;line-height:1;font:14px 'Liberation Sans', sans-serif;color:#000;transform:scaleX(0.92);transform-origin:100% 0">-6,3 ns</div>
<div style="position:absolute;right:1px;top:1px;width:2px;height:23px;background:#fff"></div>
<div style="position:absolute;right:0;top:0;width:1px;height:25px;background:#6c6c6c"></div>
</div>
<div style="position:absolute;left:1881px;top:57px;width:20px;height:12px;box-sizing:border-box;border:1px solid #7c7c7c;background:#dde6db;"></div>
<svg style="position:absolute;left:1881px;top:57px" width="20" height="12"><path d="M5.8 8.2 L13.8 8.2 L9.8 3.8 Z" fill="#000"/></svg>
<div style="position:absolute;left:1881px;top:70px;width:20px;height:12px;box-sizing:border-box;border:1px solid #7c7c7c;background:#dde6db;"></div>
<svg style="position:absolute;left:1881px;top:70px" width="20" height="12"><path d="M6.4 4.8 L14.4 4.8 L10.4 9.2 Z" fill="#000"/></svg>
<div style="position:absolute;left:1765px;top:88px;width:116px;height:25px;overflow:hidden">
<div style="position:absolute;left:0px;top:0px;width:116px;height:25px;box-sizing:border-box;border:1px solid #6c6c6c;background:#fff;"></div>
<div style="position:absolute;right:1px;top:3px;white-space:pre;line-height:1;font:14px 'Liberation Sans', sans-serif;color:#000;transform:scaleX(0.92);transform-origin:100% 0">43,5 ns</div>
<div style="position:absolute;right:1px;top:1px;width:2px;height:23px;background:#fff"></div>
<div style="position:absolute;right:0;top:0;width:1px;height:25px;background:#6c6c6c"></div>
</div>
<div style="position:absolute;left:1881px;top:88px;width:20px;height:12px;box-sizing:border-box;border:1px solid #7c7c7c;background:#dde6db;"></div>
<svg style="position:absolute;left:1881px;top:88px" width="20" height="12"><path d="M5.8 8.2 L13.8 8.2 L9.8 3.8 Z" fill="#000"/></svg>
<div style="position:absolute;left:1881px;top:101px;width:20px;height:12px;box-sizing:border-box;border:1px solid #7c7c7c;background:#dde6db;"></div>
<svg style="position:absolute;left:1881px;top:101px" width="20" height="12"><path d="M6.4 4.8 L14.4 4.8 L10.4 9.2 Z" fill="#000"/></svg>
<div style="position:absolute;left:1805px;top:119px;width:76px;height:25px;overflow:hidden">
<div style="position:absolute;left:0px;top:0px;width:76px;height:25px;box-sizing:border-box;border:1px solid #6c6c6c;background:#fff;"></div>
<div style="position:absolute;right:19px;top:3px;white-space:pre;line-height:1;font:14px 'Liberation Sans', sans-serif;color:#000;transform:scaleX(0.92);transform-origin:100% 0">200</div>
<div style="position:absolute;right:1px;top:1px;width:2px;height:23px;background:#fff"></div>
<div style="position:absolute;right:0;top:0;width:1px;height:25px;background:#6c6c6c"></div>
</div>
<div style="position:absolute;left:1881px;top:119px;width:20px;height:12px;box-sizing:border-box;border:1px solid #7c7c7c;background:#dde6db;"></div>
<svg style="position:absolute;left:1881px;top:119px" width="20" height="12"><path d="M5.8 8.2 L13.8 8.2 L9.8 3.8 Z" fill="#000"/></svg>
<div style="position:absolute;left:1881px;top:132px;width:20px;height:12px;box-sizing:border-box;border:1px solid #7c7c7c;background:#dde6db;"></div>
<svg style="position:absolute;left:1881px;top:132px" width="20" height="12"><path d="M6.4 4.8 L14.4 4.8 L10.4 9.2 Z" fill="#000"/></svg>
<div style="position:absolute;left:1719px;top:629px;width:188px;height:26px;box-sizing:border-box;border:1px solid #727272;border-radius:3px;box-shadow:inset 1px 1px 0 #fff, inset -1px -1px 0 #f4f8f3;background:linear-gradient(#e1eadf 0,#e1eadf 45%,#d3dcd1 45%,#d3dcd1 100%);overflow:hidden"></div>
<div style="position:absolute;left:1613.0px;width:400px;text-align:center;top:633.00px;white-space:pre;line-height:1;font:normal 14px 'Liberation Sans', sans-serif;color:#000;transform:scaleX(0.92);transform-origin:50% 0;">Recalculate Histogram</div>
<div style="position:absolute;left:1719px;top:660px;width:188px;height:26px;box-sizing:border-box;border:1px solid #727272;border-radius:3px;box-shadow:inset 1px 1px 0 #fff, inset -1px -1px 0 #f4f8f3;background:linear-gradient(#e1eadf 0,#e1eadf 45%,#d3dcd1 45%,#d3dcd1 100%);overflow:hidden"></div>
<div style="position:absolute;left:1613.0px;width:400px;text-align:center;top:664.00px;white-space:pre;line-height:1;font:normal 14px 'Liberation Sans', sans-serif;color:#000;transform:scaleX(0.92);transform-origin:50% 0;">Optimize View</div>
<div style="position:absolute;left:1719px;top:691px;width:188px;height:26px;box-sizing:border-box;border:1px solid #727272;border-radius:3px;box-shadow:inset 1px 1px 0 #fff, inset -1px -1px 0 #f4f8f3;background:linear-gradient(#e1eadf 0,#e1eadf 45%,#d3dcd1 45%,#d3dcd1 100%);overflow:hidden"></div>
<div style="position:absolute;left:1613.0px;width:400px;text-align:center;top:695.00px;white-space:pre;line-height:1;font:normal 14px 'Liberation Sans', sans-serif;color:#000;transform:scaleX(0.92);transform-origin:50% 0;">Autoscale Histogram</div>
<div style="position:absolute;left:1719px;top:722px;width:188px;height:26px;box-sizing:border-box;border:1px solid #727272;border-radius:3px;box-shadow:inset 1px 1px 0 #fff, inset -1px -1px 0 #f4f8f3;background:linear-gradient(#e1eadf 0,#e1eadf 45%,#d3dcd1 45%,#d3dcd1 100%);overflow:hidden"></div>
<div style="position:absolute;left:1613.0px;width:400px;text-align:center;top:726.00px;white-space:pre;line-height:1;font:normal 14px 'Liberation Sans', sans-serif;color:#000;transform:scaleX(0.92);transform-origin:50% 0;">Show All Events</div>
<div style="position:absolute;left:651px;top:777.00px;white-space:pre;line-height:1;font:normal 14px 'Liberation Sans', sans-serif;color:#000;transform:scaleX(0.92);transform-origin:0 0;">Lower Threshold (Int):</div>
<div style="position:absolute;left:802px;top:773px;width:100px;height:25px;box-sizing:border-box;border:1px solid #6c6c6c;background:#fff;"></div>
<div style="position:absolute;right:1031px;top:776.00px;white-space:pre;line-height:1;font:normal 14px 'Liberation Sans', sans-serif;color:#000;transform:scaleX(0.92);transform-origin:100% 0;">0 Cnts</div>
<div style="position:absolute;left:902px;top:773px;width:20px;height:12px;box-sizing:border-box;border:1px solid #7c7c7c;background:#dde6db;"></div>
<svg style="position:absolute;left:902px;top:773px" width="20" height="12"><path d="M5.8 8.2 L13.8 8.2 L9.8 3.8 Z" fill="#000"/></svg>
<div style="position:absolute;left:902px;top:786px;width:20px;height:12px;box-sizing:border-box;border:1px solid #7c7c7c;background:#dde6db;"></div>
<svg style="position:absolute;left:902px;top:786px" width="20" height="12"><path d="M6.4 4.8 L14.4 4.8 L10.4 9.2 Z" fill="#000"/></svg>
<div style="position:absolute;left:931px;top:777.00px;white-space:pre;line-height:1;font:normal 14px 'Liberation Sans', sans-serif;color:#000;transform:scaleX(0.92);transform-origin:0 0;">Upper Threshold (Int):</div>
<div style="position:absolute;left:1082px;top:773px;width:100px;height:25px;box-sizing:border-box;border:1px solid #6c6c6c;background:#fff;"></div>
<div style="position:absolute;right:751px;top:776.00px;white-space:pre;line-height:1;font:normal 14px 'Liberation Sans', sans-serif;color:#000;transform:scaleX(0.92);transform-origin:100% 0;">1159 Cnts</div>
<div style="position:absolute;left:1182px;top:773px;width:20px;height:12px;box-sizing:border-box;border:1px solid #7c7c7c;background:#dde6db;"></div>
<svg style="position:absolute;left:1182px;top:773px" width="20" height="12"><path d="M5.8 8.2 L13.8 8.2 L9.8 3.8 Z" fill="#000"/></svg>
<div style="position:absolute;left:1182px;top:786px;width:20px;height:12px;box-sizing:border-box;border:1px solid #7c7c7c;background:#dde6db;"></div>
<svg style="position:absolute;left:1182px;top:786px" width="20" height="12"><path d="M6.4 4.8 L14.4 4.8 L10.4 9.2 Z" fill="#000"/></svg>
<div style="position:absolute;left:1220px;top:773px;width:58px;height:26px;overflow:hidden">
<div style="position:absolute;left:0px;top:0px;width:120px;height:26px;box-sizing:border-box;border:1px solid #727272;border-radius:3px;box-shadow:inset 1px 1px 0 #fff, inset -1px -1px 0 #f4f8f3;background:linear-gradient(#e1eadf 0,#e1eadf 45%,#d3dcd1 45%,#d3dcd1 100%);overflow:hidden"></div>
<div style="position:absolute;left:18px;top:4.00px;white-space:pre;line-height:1;font:normal 14px 'Liberation Sans', sans-serif;color:#000;transform:scaleX(0.92);transform-origin:0 0;">Set to Thresholds</div>
</div>
<div style="position:absolute;left:1287px;top:777.00px;white-space:pre;line-height:1;font:normal 14px 'Liberation Sans', sans-serif;color:#000;transform:scaleX(0.92);transform-origin:0 0;">Lower Threshold (LT):</div>
<div style="position:absolute;left:1438px;top:773px;width:100px;height:25px;box-sizing:border-box;border:1px solid #6c6c6c;background:#fff;"></div>
<div style="position:absolute;right:391px;top:776.00px;white-space:pre;line-height:1;font:normal 14px 'Liberation Sans', sans-serif;color:#000;transform:scaleX(0.92);transform-origin:100% 0;">-6,4 ns</div>
<div style="position:absolute;left:1538px;top:773px;width:20px;height:12px;box-sizing:border-box;border:1px solid #7c7c7c;background:#dde6db;"></div>
<svg style="position:absolute;left:1538px;top:773px" width="20" height="12"><path d="M5.8 8.2 L13.8 8.2 L9.8 3.8 Z" fill="#000"/></svg>
<div style="position:absolute;left:1538px;top:786px;width:20px;height:12px;box-sizing:border-box;border:1px solid #7c7c7c;background:#dde6db;"></div>
<svg style="position:absolute;left:1538px;top:786px" width="20" height="12"><path d="M6.4 4.8 L14.4 4.8 L10.4 9.2 Z" fill="#000"/></svg>
<div style="position:absolute;left:1567px;top:777.00px;white-space:pre;line-height:1;font:normal 14px 'Liberation Sans', sans-serif;color:#000;transform:scaleX(0.92);transform-origin:0 0;">Upper Threshold (LT):</div>
<div style="position:absolute;left:1718px;top:773px;width:100px;height:25px;box-sizing:border-box;border:1px solid #6c6c6c;background:#fff;"></div>
<div style="position:absolute;right:111px;top:776.00px;white-space:pre;line-height:1;font:normal 14px 'Liberation Sans', sans-serif;color:#000;transform:scaleX(0.92);transform-origin:100% 0;">43,6 ns</div>
<div style="position:absolute;left:1818px;top:773px;width:20px;height:12px;box-sizing:border-box;border:1px solid #7c7c7c;background:#dde6db;"></div>
<svg style="position:absolute;left:1818px;top:773px" width="20" height="12"><path d="M5.8 8.2 L13.8 8.2 L9.8 3.8 Z" fill="#000"/></svg>
<div style="position:absolute;left:1818px;top:786px;width:20px;height:12px;box-sizing:border-box;border:1px solid #7c7c7c;background:#dde6db;"></div>
<svg style="position:absolute;left:1818px;top:786px" width="20" height="12"><path d="M6.4 4.8 L14.4 4.8 L10.4 9.2 Z" fill="#000"/></svg>
<div style="position:absolute;left:1856px;top:773px;width:57px;height:26px;overflow:hidden">
<div style="position:absolute;left:0px;top:0px;width:120px;height:26px;box-sizing:border-box;border:1px solid #727272;border-radius:3px;box-shadow:inset 1px 1px 0 #fff, inset -1px -1px 0 #f4f8f3;background:linear-gradient(#e1eadf 0,#e1eadf 45%,#d3dcd1 45%,#d3dcd1 100%);overflow:hidden"></div>
<div style="position:absolute;left:18px;top:4.00px;white-space:pre;line-height:1;font:normal 14px 'Liberation Sans', sans-serif;color:#000;transform:scaleX(0.92);transform-origin:0 0;">Set to</div>
</div>
<div style="position:absolute;left:642px;top:28px;width:436px;height:744px;background:#fff;"></div>
<svg style="position:absolute;left:0;top:0" width="1920" height="809">
<defs><clipPath id="ci"><rect x="702" y="60" width="365" height="659"/></clipPath></defs>
<g shape-rendering="crispEdges">
<line x1="711.5" y1="60" x2="711.5" y2="719" stroke="#e6e6e6"/>
<line x1="739.5" y1="60" x2="739.5" y2="719" stroke="#e6e6e6"/>
<line x1="753.5" y1="60" x2="753.5" y2="719" stroke="#e6e6e6"/>
<line x1="766.5" y1="60" x2="766.5" y2="719" stroke="#e6e6e6"/>
<line x1="794.5" y1="60" x2="794.5" y2="719" stroke="#e6e6e6"/>
<line x1="808.5" y1="60" x2="808.5" y2="719" stroke="#e6e6e6"/>
<line x1="822.5" y1="60" x2="822.5" y2="719" stroke="#e6e6e6"/>
<line x1="849.5" y1="60" x2="849.5" y2="719" stroke="#e6e6e6"/>
<line x1="863.5" y1="60" x2="863.5" y2="719" stroke="#e6e6e6"/>
<line x1="877.5" y1="60" x2="877.5" y2="719" stroke="#e6e6e6"/>
<line x1="904.5" y1="60" x2="904.5" y2="719" stroke="#e6e6e6"/>
<line x1="918.5" y1="60" x2="918.5" y2="719" stroke="#e6e6e6"/>
<line x1="932.5" y1="60" x2="932.5" y2="719" stroke="#e6e6e6"/>
<line x1="959.5" y1="60" x2="959.5" y2="719" stroke="#e6e6e6"/>
<line x1="973.5" y1="60" x2="973.5" y2="719" stroke="#e6e6e6"/>
<line x1="987.5" y1="60" x2="987.5" y2="719" stroke="#e6e6e6"/>
<line x1="1014.5" y1="60" x2="1014.5" y2="719" stroke="#e6e6e6"/>
<line x1="1028.5" y1="60" x2="1028.5" y2="719" stroke="#e6e6e6"/>
<line x1="1042.5" y1="60" x2="1042.5" y2="719" stroke="#e6e6e6"/>
<line x1="702" y1="718.5" x2="1067" y2="718.5" stroke="#e6e6e6"/>
<line x1="702" y1="693.5" x2="1067" y2="693.5" stroke="#e6e6e6"/>
<line x1="702" y1="675.5" x2="1067" y2="675.5" stroke="#e6e6e6"/>
<line x1="702" y1="661.5" x2="1067" y2="661.5" stroke="#e6e6e6"/>
<line x1="702" y1="649.5" x2="1067" y2="649.5" stroke="#e6e6e6"/>
<line x1="702" y1="639.5" x2="1067" y2="639.5" stroke="#e6e6e6"/>
<line x1="702" y1="631.5" x2="1067" y2="631.5" stroke="#e6e6e6"/>
<line x1="702" y1="624.5" x2="1067" y2="624.5" stroke="#e6e6e6"/>
<line x1="702" y1="573.5" x2="1067" y2="573.5" stroke="#e6e6e6"/>
<line x1="702" y1="548.5" x2="1067" y2="548.5" stroke="#e6e6e6"/>
<line x1="702" y1="530.5" x2="1067" y2="530.5" stroke="#e6e6e6"/>
<line x1="702" y1="516.5" x2="1067" y2="516.5" stroke="#e6e6e6"/>
<line x1="702" y1="504.5" x2="1067" y2="504.5" stroke="#e6e6e6"/>
<line x1="702" y1="495.5" x2="1067" y2="495.5" stroke="#e6e6e6"/>
<line x1="702" y1="486.5" x2="1067" y2="486.5" stroke="#e6e6e6"/>
<line x1="702" y1="479.5" x2="1067" y2="479.5" stroke="#e6e6e6"/>
<line x1="702" y1="429.5" x2="1067" y2="429.5" stroke="#e6e6e6"/>
<line x1="702" y1="404.5" x2="1067" y2="404.5" stroke="#e6e6e6"/>
<line x1="702" y1="386.5" x2="1067" y2="386.5" stroke="#e6e6e6"/>
<line x1="702" y1="372.5" x2="1067" y2="372.5" stroke="#e6e6e6"/>
<line x1="702" y1="360.5" x2="1067" y2="360.5" stroke="#e6e6e6"/>
<line x1="702" y1="351.5" x2="1067" y2="351.5" stroke="#e6e6e6"/>
<line x1="702" y1="342.5" x2="1067" y2="342.5" stroke="#e6e6e6"/>
<line x1="702" y1="335.5" x2="1067" y2="335.5" stroke="#e6e6e6"/>
<line x1="702" y1="285.5" x2="1067" y2="285.5" stroke="#e6e6e6"/>
<line x1="702" y1="259.5" x2="1067" y2="259.5" stroke="#e6e6e6"/>
<line x1="702" y1="241.5" x2="1067" y2="241.5" stroke="#e6e6e6"/>
<line x1="702" y1="227.5" x2="1067" y2="227.5" stroke="#e6e6e6"/>
<line x1="702" y1="216.5" x2="1067" y2="216.5" stroke="#e6e6e6"/>
<line x1="702" y1="206.5" x2="1067" y2="206.5" stroke="#e6e6e6"/>
<line x1="702" y1="198.5" x2="1067" y2="198.5" stroke="#e6e6e6"/>
<line x1="702" y1="191.5" x2="1067" y2="191.5" stroke="#e6e6e6"/>
<line x1="702" y1="141.5" x2="1067" y2="141.5" stroke="#e6e6e6"/>
<line x1="702" y1="115.5" x2="1067" y2="115.5" stroke="#e6e6e6"/>
<line x1="702" y1="97.5" x2="1067" y2="97.5" stroke="#e6e6e6"/>
<line x1="702" y1="83.5" x2="1067" y2="83.5" stroke="#e6e6e6"/>
<line x1="702" y1="72.5" x2="1067" y2="72.5" stroke="#e6e6e6"/>
<line x1="702" y1="62.5" x2="1067" y2="62.5" stroke="#e6e6e6"/>
<line x1="725.5" y1="60" x2="725.5" y2="719" stroke="#a0a0a0"/>
<line x1="780.5" y1="60" x2="780.5" y2="719" stroke="#a0a0a0"/>
<line x1="835.5" y1="60" x2="835.5" y2="719" stroke="#a0a0a0"/>
<line x1="890.5" y1="60" x2="890.5" y2="719" stroke="#a0a0a0"/>
<line x1="946.5" y1="60" x2="946.5" y2="719" stroke="#a0a0a0"/>
<line x1="1001.5" y1="60" x2="1001.5" y2="719" stroke="#a0a0a0"/>
<line x1="1056.5" y1="60" x2="1056.5" y2="719" stroke="#a0a0a0"/>
<line x1="702" y1="617.5" x2="1067" y2="617.5" stroke="#a0a0a0"/>
<line x1="702" y1="472.5" x2="1067" y2="472.5" stroke="#a0a0a0"/>
<line x1="702" y1="328.5" x2="1067" y2="328.5" stroke="#a0a0a0"/>
<line x1="702" y1="184.5" x2="1067" y2="184.5" stroke="#a0a0a0"/>
<rect x="711" y="60" width="1" height="1" fill="#000"/>
<rect x="711" y="718" width="1" height="1" fill="#000"/>
<rect x="725" y="60" width="1" height="3" fill="#000"/>
<rect x="725" y="716" width="1" height="3" fill="#000"/>
<rect x="739" y="60" width="1" height="1" fill="#000"/>
<rect x="739" y="718" width="1" height="1" fill="#000"/>
<rect x="753" y="60" width="1" height="1" fill="#000"/>
<rect x="753" y="718" width="1" height="1" fill="#000"/>
<rect x="766" y="60" width="1" height="1" fill="#000"/>
<rect x="766" y="718" width="1" height="1" fill="#000"/>
<rect x="780" y="60" width="1" height="3" fill="#000"/>
<rect x="780" y="716" width="1" height="3" fill="#000"/>
<rect x="794" y="60" width="1" height="1" fill="#000"/>
<rect x="794" y="718" width="1" height="1" fill="#000"/>
<rect x="808" y="60" width="1" height="1" fill="#000"/>
<rect x="808" y="718" width="1" height="1" fill="#000"/>
<rect x="822" y="60" width="1" height="1" fill="#000"/>
<rect x="822" y="718" width="1" height="1" fill="#000"/>
<rect x="835" y="60" width="1" height="3" fill="#000"/>
<rect x="835" y="716" width="1" height="3" fill="#000"/>
<rect x="849" y="60" width="1" height="1" fill="#000"/>
<rect x="849" y="718" width="1" height="1" fill="#000"/>
<rect x="863" y="60" width="1" height="1" fill="#000"/>
<rect x="863" y="718" width="1" height="1" fill="#000"/>
<rect x="877" y="60" width="1" height="1" fill="#000"/>
<rect x="877" y="718" width="1" height="1" fill="#000"/>
<rect x="890" y="60" width="1" height="3" fill="#000"/>
<rect x="890" y="716" width="1" height="3" fill="#000"/>
<rect x="904" y="60" width="1" height="1" fill="#000"/>
<rect x="904" y="718" width="1" height="1" fill="#000"/>
<rect x="918" y="60" width="1" height="1" fill="#000"/>
<rect x="918" y="718" width="1" height="1" fill="#000"/>
<rect x="932" y="60" width="1" height="1" fill="#000"/>
<rect x="932" y="718" width="1" height="1" fill="#000"/>
<rect x="946" y="60" width="1" height="3" fill="#000"/>
<rect x="946" y="716" width="1" height="3" fill="#000"/>
<rect x="959" y="60" width="1" height="1" fill="#000"/>
<rect x="959" y="718" width="1" height="1" fill="#000"/>
<rect x="973" y="60" width="1" height="1" fill="#000"/>
<rect x="973" y="718" width="1" height="1" fill="#000"/>
<rect x="987" y="60" width="1" height="1" fill="#000"/>
<rect x="987" y="718" width="1" height="1" fill="#000"/>
<rect x="1001" y="60" width="1" height="3" fill="#000"/>
<rect x="1001" y="716" width="1" height="3" fill="#000"/>
<rect x="1014" y="60" width="1" height="1" fill="#000"/>
<rect x="1014" y="718" width="1" height="1" fill="#000"/>
<rect x="1028" y="60" width="1" height="1" fill="#000"/>
<rect x="1028" y="718" width="1" height="1" fill="#000"/>
<rect x="1042" y="60" width="1" height="1" fill="#000"/>
<rect x="1042" y="718" width="1" height="1" fill="#000"/>
<rect x="1056" y="60" width="1" height="3" fill="#000"/>
<rect x="1056" y="716" width="1" height="3" fill="#000"/>
<rect x="702" y="718" width="1" height="1" fill="#000"/>
<rect x="702" y="693" width="1" height="1" fill="#000"/>
<rect x="702" y="675" width="1" height="1" fill="#000"/>
<rect x="702" y="661" width="1" height="1" fill="#000"/>
<rect x="702" y="649" width="1" height="1" fill="#000"/>
<rect x="702" y="639" width="1" height="1" fill="#000"/>
<rect x="702" y="631" width="1" height="1" fill="#000"/>
<rect x="702" y="624" width="1" height="1" fill="#000"/>
<rect x="702" y="617" width="3" height="1" fill="#000"/>
<rect x="702" y="573" width="1" height="1" fill="#000"/>
<rect x="702" y="548" width="1" height="1" fill="#000"/>
<rect x="702" y="530" width="1" height="1" fill="#000"/>
<rect x="702" y="516" width="1" height="1" fill="#000"/>
<rect x="702" y="504" width="1" height="1" fill="#000"/>
<rect x="702" y="495" width="1" height="1" fill="#000"/>
<rect x="702" y="486" width="1" height="1" fill="#000"/>
<rect x="702" y="479" width="1" height="1" fill="#000"/>
<rect x="702" y="472" width="3" height="1" fill="#000"/>
<rect x="702" y="429" width="1" height="1" fill="#000"/>
<rect x="702" y="404" width="1" height="1" fill="#000"/>
<rect x="702" y="386" width="1" height="1" fill="#000"/>
<rect x="702" y="372" width="1" height="1" fill="#000"/>
<rect x="702" y="360" width="1" height="1" fill="#000"/>
<rect x="702" y="351" width="1" height="1" fill="#000"/>
<rect x="702" y="342" width="1" height="1" fill="#000"/>
<rect x="702" y="335" width="1" height="1" fill="#000"/>
<rect x="702" y="328" width="3" height="1" fill="#000"/>
<rect x="702" y="285" width="1" height="1" fill="#000"/>
<rect x="702" y="259" width="1" height="1" fill="#000"/>
<rect x="702" y="241" width="1" height="1" fill="#000"/>
<rect x="702" y="227" width="1" height="1" fill="#000"/>
<rect x="702" y="216" width="1" height="1" fill="#000"/>
<rect x="702" y="206" width="1" height="1" fill="#000"/>
<rect x="702" y="198" width="1" height="1" fill="#000"/>
<rect x="702" y="191" width="1" height="1" fill="#000"/>
<rect x="702" y="184" width="3" height="1" fill="#000"/>
<rect x="702" y="141" width="1" height="1" fill="#000"/>
<rect x="702" y="115" width="1" height="1" fill="#000"/>
<rect x="702" y="97" width="1" height="1" fill="#000"/>
<rect x="702" y="83" width="1" height="1" fill="#000"/>
<rect x="702" y="72" width="1" height="1" fill="#000"/>
<rect x="702" y="62" width="1" height="1" fill="#000"/>
</g>
<g clip-path="url(#ci)">
<polyline fill="none" stroke="#000" stroke-width="2" points="725.0,740.0 725.0,170.0 726.8,167.9 727.4,156.7 729.9,156.1 729.9,163.5 732.4,172.2 734.2,174.7 735.5,185.8 736.7,200.6 737.3,214.8 739.2,220.4 741.0,222.3 743.5,237.1 744.1,245.0 747.2,275.0 748.8,316.8 751.0,333.0 752.0,361.9 753.7,374.8 755.5,376.0 756.0,387.7 756.9,400.5 758.5,401.0 759.3,423.0 760.2,423.0 760.9,416.6 761.5,416.6 762.5,439.0 763.3,439.0 764.1,404.5 765.0,404.5 765.7,416.6 766.5,447.0"/>
<path d="M796 617.0 H1002 M1027 617.0 H1038" stroke="#000" stroke-width="2" fill="none" shape-rendering="crispEdges"/>
<rect x="766.0" y="442.0" width="2.5" height="20.0" fill="#000" shape-rendering="crispEdges"/>
<rect x="768.0" y="442.0" width="5.0" height="41.6" fill="#000" shape-rendering="crispEdges"/>
<rect x="768.5" y="455.0" width="2.3" height="32.4" fill="#000" shape-rendering="crispEdges"/>
<rect x="773.0" y="471.4" width="3.0" height="5.2" fill="#000" shape-rendering="crispEdges"/>
<rect x="776.0" y="455.0" width="2.2" height="32.4" fill="#000" shape-rendering="crispEdges"/>
<rect x="778.6" y="465.4" width="4.0" height="8.0" fill="#000" shape-rendering="crispEdges"/>
<rect x="782.6" y="442.0" width="1.9" height="45.4" fill="#000" shape-rendering="crispEdges"/>
<rect x="781.9" y="485.4" width="2.9" height="20.1" fill="#000" shape-rendering="crispEdges"/>
<rect x="784.8" y="485.4" width="3.0" height="31.5" fill="#000" shape-rendering="crispEdges"/>
<rect x="787.8" y="485.4" width="2.2" height="10.4" fill="#000" shape-rendering="crispEdges"/>
<rect x="789.3" y="485.4" width="3.0" height="31.5" fill="#000" shape-rendering="crispEdges"/>
<rect x="792.3" y="528.9" width="4.4" height="45.5" fill="#000" shape-rendering="crispEdges"/>
<rect x="796.0" y="572.5" width="3.0" height="45.5" fill="#000" shape-rendering="crispEdges"/>
<rect x="797.4" y="514.9" width="3.0" height="59.5" fill="#000" shape-rendering="crispEdges"/>
<rect x="800.4" y="547.0" width="2.2" height="27.5" fill="#000" shape-rendering="crispEdges"/>
<rect x="803.4" y="547.0" width="3.6" height="27.5" fill="#000" shape-rendering="crispEdges"/>
<rect x="804.9" y="528.9" width="2.9" height="20.1" fill="#000" shape-rendering="crispEdges"/>
<rect x="807.2" y="572.5" width="2.4" height="45.5" fill="#000" shape-rendering="crispEdges"/>
<rect x="810.0" y="514.9" width="3.0" height="225.1" fill="#000" shape-rendering="crispEdges"/>
<rect x="813.0" y="547.0" width="2.0" height="193.0" fill="#000" shape-rendering="crispEdges"/>
<rect x="816.0" y="572.5" width="2.0" height="167.5" fill="#000" shape-rendering="crispEdges"/>
<rect x="818.2" y="514.9" width="3.0" height="59.5" fill="#000" shape-rendering="crispEdges"/>
<rect x="820.9" y="547.0" width="2.9" height="71.0" fill="#000" shape-rendering="crispEdges"/>
<rect x="823.4" y="547.0" width="3.0" height="27.5" fill="#000" shape-rendering="crispEdges"/>
<rect x="826.3" y="572.5" width="2.4" height="45.5" fill="#000" shape-rendering="crispEdges"/>
<rect x="828.7" y="616.0" width="3.3" height="124.0" fill="#000" shape-rendering="crispEdges"/>
<rect x="831.2" y="572.5" width="6.5" height="29.1" fill="#000" shape-rendering="crispEdges"/>
<rect x="837.7" y="572.5" width="4.1" height="2.0" fill="#000" shape-rendering="crispEdges"/>
<rect x="841.2" y="547.0" width="2.2" height="27.5" fill="#000" shape-rendering="crispEdges"/>
<rect x="841.8" y="572.5" width="6.2" height="167.5" fill="#000" shape-rendering="crispEdges"/>
<rect x="849.9" y="572.5" width="2.0" height="167.5" fill="#000" shape-rendering="crispEdges"/>
<rect x="850.9" y="503.5" width="2.9" height="71.0" fill="#000" shape-rendering="crispEdges"/>
<rect x="850.1" y="547.0" width="0.9" height="27.5" fill="#000" shape-rendering="crispEdges"/>
<rect x="852.9" y="572.5" width="3.9" height="167.5" fill="#000" shape-rendering="crispEdges"/>
<rect x="858.3" y="528.9" width="2.5" height="45.5" fill="#000" shape-rendering="crispEdges"/>
<rect x="858.0" y="572.5" width="9.9" height="45.5" fill="#000" shape-rendering="crispEdges"/>
<rect x="863.0" y="572.5" width="5.2" height="167.5" fill="#000" shape-rendering="crispEdges"/>
<rect x="865.0" y="528.9" width="3.0" height="45.5" fill="#000" shape-rendering="crispEdges"/>
<rect x="868.7" y="572.5" width="2.1" height="167.5" fill="#000" shape-rendering="crispEdges"/>
<rect x="870.1" y="572.5" width="3.0" height="45.5" fill="#000" shape-rendering="crispEdges"/>
<rect x="875.3" y="547.0" width="2.3" height="27.5" fill="#000" shape-rendering="crispEdges"/>
<rect x="873.9" y="572.5" width="5.9" height="45.5" fill="#000" shape-rendering="crispEdges"/>
<rect x="880.9" y="599.5" width="9.8" height="140.5" fill="#000" shape-rendering="crispEdges"/>
<rect x="882.8" y="572.5" width="3.7" height="45.5" fill="#000" shape-rendering="crispEdges"/>
<rect x="887.2" y="547.0" width="3.0" height="71.0" fill="#000" shape-rendering="crispEdges"/>
<rect x="891.0" y="616.0" width="9.5" height="124.0" fill="#000" shape-rendering="crispEdges"/>
<rect x="891.7" y="572.5" width="5.9" height="45.5" fill="#000" shape-rendering="crispEdges"/>
<rect x="905.9" y="616.0" width="6.0" height="124.0" fill="#000" shape-rendering="crispEdges"/>
<rect x="916.0" y="616.0" width="2.8" height="124.0" fill="#000" shape-rendering="crispEdges"/>
<rect x="923.0" y="547.0" width="2.8" height="193.0" fill="#000" shape-rendering="crispEdges"/>
<rect x="931.2" y="616.0" width="8.5" height="124.0" fill="#000" shape-rendering="crispEdges"/>
<rect x="934.0" y="572.5" width="2.9" height="45.5" fill="#000" shape-rendering="crispEdges"/>
<rect x="943.7" y="616.0" width="3.3" height="124.0" fill="#000" shape-rendering="crispEdges"/>
<rect x="948.1" y="616.0" width="3.8" height="124.0" fill="#000" shape-rendering="crispEdges"/>
<rect x="953.0" y="616.0" width="3.0" height="124.0" fill="#000" shape-rendering="crispEdges"/>
<rect x="959.7" y="616.0" width="2.0" height="124.0" fill="#000" shape-rendering="crispEdges"/>
<rect x="960.9" y="572.5" width="4.2" height="45.5" fill="#000" shape-rendering="crispEdges"/>
<rect x="963.8" y="616.0" width="2.0" height="124.0" fill="#000" shape-rendering="crispEdges"/>
<rect x="966.6" y="572.5" width="3.2" height="167.5" fill="#000" shape-rendering="crispEdges"/>
<rect x="973.1" y="616.0" width="4.1" height="124.0" fill="#000" shape-rendering="crispEdges"/>
<rect x="978.0" y="616.0" width="2.8" height="124.0" fill="#000" shape-rendering="crispEdges"/>
<rect x="982.1" y="616.0" width="5.7" height="124.0" fill="#000" shape-rendering="crispEdges"/>
<rect x="991.0" y="616.0" width="2.2" height="124.0" fill="#000" shape-rendering="crispEdges"/>
<rect x="991.8" y="572.5" width="3.0" height="167.5" fill="#000" shape-rendering="crispEdges"/>
<rect x="994.0" y="616.0" width="2.0" height="124.0" fill="#000" shape-rendering="crispEdges"/>
<rect x="998.7" y="616.0" width="2.9" height="124.0" fill="#000" shape-rendering="crispEdges"/>
<rect x="1027.0" y="616.0" width="3.0" height="124.0" fill="#000" shape-rendering="crispEdges"/>
<rect x="1031.0" y="616.0" width="3.0" height="124.0" fill="#000" shape-rendering="crispEdges"/>
<rect x="1035.0" y="616.0" width="3.0" height="124.0" fill="#000" shape-rendering="crispEdges"/>
<rect x="724" y="59" width="2" height="661" fill="#0000ff"/>
<path d="M726 86.0 L729 88.6 L726 91.2 Z" fill="#0000ff"/>
<path d="M726 116.0 L729 118.6 L726 121.2 Z" fill="#0000ff"/>
<path d="M726 146.0 L729 148.6 L726 151.2 Z" fill="#0000ff"/>
<path d="M726 176.0 L729 178.6 L726 181.2 Z" fill="#0000ff"/>
<path d="M726 206.0 L729 208.6 L726 211.2 Z" fill="#0000ff"/>
<path d="M726 236.0 L729 238.6 L726 241.2 Z" fill="#0000ff"/>
<path d="M726 266.0 L729 268.6 L726 271.2 Z" fill="#0000ff"/>
<path d="M726 296.0 L729 298.6 L726 301.2 Z" fill="#0000ff"/>
<path d="M726 326.0 L729 328.6 L726 331.2 Z" fill="#0000ff"/>
<path d="M726 356.0 L729 358.6 L726 361.2 Z" fill="#0000ff"/>
<path d="M726 386.0 L729 388.6 L726 391.2 Z" fill="#0000ff"/>
<path d="M726 416.0 L729 418.6 L726 421.2 Z" fill="#0000ff"/>
<path d="M726 446.0 L729 448.6 L726 451.2 Z" fill="#0000ff"/>
<path d="M726 476.0 L729 478.6 L726 481.2 Z" fill="#0000ff"/>
<path d="M726 506.0 L729 508.6 L726 511.2 Z" fill="#0000ff"/>
<path d="M726 536.0 L729 538.6 L726 541.2 Z" fill="#0000ff"/>
<path d="M726 566.0 L729 568.6 L726 571.2 Z" fill="#0000ff"/>
<path d="M726 596.0 L729 598.6 L726 601.2 Z" fill="#0000ff"/>
<path d="M726 626.0 L729 628.6 L726 631.2 Z" fill="#0000ff"/>
<path d="M726 656.0 L729 658.6 L726 661.2 Z" fill="#0000ff"/>
<path d="M726 686.0 L729 688.6 L726 691.2 Z" fill="#0000ff"/>
<path d="M726 716.0 L729 718.6 L726 721.2 Z" fill="#0000ff"/>
<rect x="1043" y="59" width="2" height="661" fill="#0000ff"/>
<path d="M1043 86.0 L1040 88.6 L1043 91.2 Z" fill="#0000ff"/>
<path d="M1043 116.0 L1040 118.6 L1043 121.2 Z" fill="#0000ff"/>
<path d="M1043 146.0 L1040 148.6 L1043 151.2 Z" fill="#0000ff"/>
<path d="M1043 176.0 L1040 178.6 L1043 181.2 Z" fill="#0000ff"/>
<path d="M1043 206.0 L1040 208.6 L1043 211.2 Z" fill="#0000ff"/>
<path d="M1043 236.0 L1040 238.6 L1043 241.2 Z" fill="#0000ff"/>
<path d="M1043 266.0 L1040 268.6 L1043 271.2 Z" fill="#0000ff"/>
<path d="M1043 296.0 L1040 298.6 L1043 301.2 Z" fill="#0000ff"/>
<path d="M1043 326.0 L1040 328.6 L1043 331.2 Z" fill="#0000ff"/>
<path d="M1043 356.0 L1040 358.6 L1043 361.2 Z" fill="#0000ff"/>
<path d="M1043 386.0 L1040 388.6 L1043 391.2 Z" fill="#0000ff"/>
<path d="M1043 416.0 L1040 418.6 L1043 421.2 Z" fill="#0000ff"/>
<path d="M1043 446.0 L1040 448.6 L1043 451.2 Z" fill="#0000ff"/>
<path d="M1043 476.0 L1040 478.6 L1043 481.2 Z" fill="#0000ff"/>
<path d="M1043 506.0 L1040 508.6 L1043 511.2 Z" fill="#0000ff"/>
<path d="M1043 536.0 L1040 538.6 L1043 541.2 Z" fill="#0000ff"/>
<path d="M1043 566.0 L1040 568.6 L1043 571.2 Z" fill="#0000ff"/>
<path d="M1043 596.0 L1040 598.6 L1043 601.2 Z" fill="#0000ff"/>
<path d="M1043 626.0 L1040 628.6 L1043 631.2 Z" fill="#0000ff"/>
<path d="M1043 656.0 L1040 658.6 L1043 661.2 Z" fill="#0000ff"/>
<path d="M1043 686.0 L1040 688.6 L1043 691.2 Z" fill="#0000ff"/>
<path d="M1043 716.0 L1040 718.6 L1043 721.2 Z" fill="#0000ff"/>
</g>
<rect x="701.5" y="59.5" width="366" height="660" fill="none" stroke="#000" shape-rendering="crispEdges"/>
</svg>
<div style="position:absolute;left:685.1px;top:721px;width:80px;text-align:center;font:16px 'Liberation Sans', sans-serif;line-height:18px;color:#000;white-space:pre;transform:scaleX(1.06)">0,0</div>
<div style="position:absolute;left:740.2px;top:721px;width:80px;text-align:center;font:16px 'Liberation Sans', sans-serif;line-height:18px;color:#000;white-space:pre;transform:scaleX(1.06)">0,2</div>
<div style="position:absolute;left:795.3000000000001px;top:721px;width:80px;text-align:center;font:16px 'Liberation Sans', sans-serif;line-height:18px;color:#000;white-space:pre;transform:scaleX(1.06)">0,4</div>
<div style="position:absolute;left:850.4000000000001px;top:721px;width:80px;text-align:center;font:16px 'Liberation Sans', sans-serif;line-height:18px;color:#000;white-space:pre;transform:scaleX(1.06)">0,6</div>
<div style="position:absolute;left:905.5px;top:721px;width:80px;text-align:center;font:16px 'Liberation Sans', sans-serif;line-height:18px;color:#000;white-space:pre;transform:scaleX(1.06)">0,8</div>
<div style="position:absolute;left:960.6px;top:721px;width:80px;text-align:center;font:16px 'Liberation Sans', sans-serif;line-height:18px;color:#000;white-space:pre;transform:scaleX(1.06)">1,0</div>
<div style="position:absolute;left:1015.7px;top:721px;width:80px;text-align:center;font:16px 'Liberation Sans', sans-serif;line-height:18px;color:#000;white-space:pre;transform:scaleX(1.06)">1,2</div>
<div style="position:absolute;left:611px;top:608.5px;width:88px;text-align:right;font:16px 'Liberation Sans', sans-serif;line-height:18px;color:#000;white-space:pre;transform:scaleX(1.04);transform-origin:100% 0">10<span style="position:relative;top:-2.5px;font-size:12.5px">0</span></div>
<div style="position:absolute;left:611px;top:463.9px;width:88px;text-align:right;font:16px 'Liberation Sans', sans-serif;line-height:18px;color:#000;white-space:pre;transform:scaleX(1.04);transform-origin:100% 0">10<span style="position:relative;top:-2.5px;font-size:12.5px">1</span></div>
<div style="position:absolute;left:611px;top:319.7px;width:88px;text-align:right;font:16px 'Liberation Sans', sans-serif;line-height:18px;color:#000;white-space:pre;transform:scaleX(1.04);transform-origin:100% 0">10<span style="position:relative;top:-2.5px;font-size:12.5px">2</span></div>
<div style="position:absolute;left:611px;top:175.5px;width:88px;text-align:right;font:16px 'Liberation Sans', sans-serif;line-height:18px;color:#000;white-space:pre;transform:scaleX(1.04);transform-origin:100% 0">10<span style="position:relative;top:-2.5px;font-size:12.5px">3</span></div>
<div style="position:absolute;left:709px;top:39px;width:300px;text-align:center;font:bold 16px 'Liberation Sans', sans-serif;line-height:18px;color:#000;white-space:pre;transform:scaleX(1.02)">Intensity Histogram</div>
<div style="position:absolute;left:734px;top:742px;width:300px;text-align:center;font:16px 'Liberation Sans', sans-serif;line-height:18px;color:#000;white-space:pre;transform:scaleX(1.03)">Intensity [kCnts]</div>
<svg style="position:absolute;left:0;top:0" width="1920" height="809"><g transform="translate(666.5,460.3) rotate(-90)" font-family="Liberation Sans" font-size="16" fill="#000"><text x="-0.8" y="0" textLength="69" lengthAdjust="spacingAndGlyphs">Occur. [10</text><text x="77" y="-6" font-size="10.5">3</text><text x="88.3" y="0" textLength="49.8" lengthAdjust="spacingAndGlyphs">Events]</text></g></svg>
<div style="position:absolute;left:1278px;top:28px;width:435px;height:744px;background:#fff;"></div>
<svg style="position:absolute;left:0;top:0" width="1920" height="809">
<defs><clipPath id="cl"><rect x="1340" y="60" width="362" height="659"/></clipPath></defs>
<g shape-rendering="crispEdges">
<line x1="1351.5" y1="60" x2="1351.5" y2="719" stroke="#e6e6e6"/>
<line x1="1364.5" y1="60" x2="1364.5" y2="719" stroke="#e6e6e6"/>
<line x1="1377.5" y1="60" x2="1377.5" y2="719" stroke="#e6e6e6"/>
<line x1="1390.5" y1="60" x2="1390.5" y2="719" stroke="#e6e6e6"/>
<line x1="1415.5" y1="60" x2="1415.5" y2="719" stroke="#e6e6e6"/>
<line x1="1428.5" y1="60" x2="1428.5" y2="719" stroke="#e6e6e6"/>
<line x1="1441.5" y1="60" x2="1441.5" y2="719" stroke="#e6e6e6"/>
<line x1="1453.5" y1="60" x2="1453.5" y2="719" stroke="#e6e6e6"/>
<line x1="1479.5" y1="60" x2="1479.5" y2="719" stroke="#e6e6e6"/>
<line x1="1492.5" y1="60" x2="1492.5" y2="719" stroke="#e6e6e6"/>
<line x1="1504.5" y1="60" x2="1504.5" y2="719" stroke="#e6e6e6"/>
<line x1="1517.5" y1="60" x2="1517.5" y2="719" stroke="#e6e6e6"/>
<line x1="1543.5" y1="60" x2="1543.5" y2="719" stroke="#e6e6e6"/>
<line x1="1555.5" y1="60" x2="1555.5" y2="719" stroke="#e6e6e6"/>
<line x1="1568.5" y1="60" x2="1568.5" y2="719" stroke="#e6e6e6"/>
<line x1="1581.5" y1="60" x2="1581.5" y2="719" stroke="#e6e6e6"/>
<line x1="1606.5" y1="60" x2="1606.5" y2="719" stroke="#e6e6e6"/>
<line x1="1619.5" y1="60" x2="1619.5" y2="719" stroke="#e6e6e6"/>
<line x1="1632.5" y1="60" x2="1632.5" y2="719" stroke="#e6e6e6"/>
<line x1="1645.5" y1="60" x2="1645.5" y2="719" stroke="#e6e6e6"/>
<line x1="1670.5" y1="60" x2="1670.5" y2="719" stroke="#e6e6e6"/>
<line x1="1683.5" y1="60" x2="1683.5" y2="719" stroke="#e6e6e6"/>
<line x1="1696.5" y1="60" x2="1696.5" y2="719" stroke="#e6e6e6"/>
<line x1="1340" y1="718.5" x2="1702" y2="718.5" stroke="#e6e6e6"/>
<line x1="1340" y1="702.5" x2="1702" y2="702.5" stroke="#e6e6e6"/>
<line x1="1340" y1="695.5" x2="1702" y2="695.5" stroke="#e6e6e6"/>
<line x1="1340" y1="687.5" x2="1702" y2="687.5" stroke="#e6e6e6"/>
<line x1="1340" y1="679.5" x2="1702" y2="679.5" stroke="#e6e6e6"/>
<line x1="1340" y1="664.5" x2="1702" y2="664.5" stroke="#e6e6e6"/>
<line x1="1340" y1="656.5" x2="1702" y2="656.5" stroke="#e6e6e6"/>
<line x1="1340" y1="648.5" x2="1702" y2="648.5" stroke="#e6e6e6"/>
<line x1="1340" y1="641.5" x2="1702" y2="641.5" stroke="#e6e6e6"/>
<line x1="1340" y1="625.5" x2="1702" y2="625.5" stroke="#e6e6e6"/>
<line x1="1340" y1="618.5" x2="1702" y2="618.5" stroke="#e6e6e6"/>
<line x1="1340" y1="610.5" x2="1702" y2="610.5" stroke="#e6e6e6"/>
<line x1="1340" y1="602.5" x2="1702" y2="602.5" stroke="#e6e6e6"/>
<line x1="1340" y1="587.5" x2="1702" y2="587.5" stroke="#e6e6e6"/>
<line x1="1340" y1="579.5" x2="1702" y2="579.5" stroke="#e6e6e6"/>
<line x1="1340" y1="571.5" x2="1702" y2="571.5" stroke="#e6e6e6"/>
<line x1="1340" y1="564.5" x2="1702" y2="564.5" stroke="#e6e6e6"/>
<line x1="1340" y1="548.5" x2="1702" y2="548.5" stroke="#e6e6e6"/>
<line x1="1340" y1="540.5" x2="1702" y2="540.5" stroke="#e6e6e6"/>
<line x1="1340" y1="533.5" x2="1702" y2="533.5" stroke="#e6e6e6"/>
<line x1="1340" y1="525.5" x2="1702" y2="525.5" stroke="#e6e6e6"/>
<line x1="1340" y1="510.5" x2="1702" y2="510.5" stroke="#e6e6e6"/>
<line x1="1340" y1="502.5" x2="1702" y2="502.5" stroke="#e6e6e6"/>
<line x1="1340" y1="494.5" x2="1702" y2="494.5" stroke="#e6e6e6"/>
<line x1="1340" y1="486.5" x2="1702" y2="486.5" stroke="#e6e6e6"/>
<line x1="1340" y1="471.5" x2="1702" y2="471.5" stroke="#e6e6e6"/>
<line x1="1340" y1="463.5" x2="1702" y2="463.5" stroke="#e6e6e6"/>
<line x1="1340" y1="456.5" x2="1702" y2="456.5" stroke="#e6e6e6"/>
<line x1="1340" y1="448.5" x2="1702" y2="448.5" stroke="#e6e6e6"/>
<line x1="1340" y1="432.5" x2="1702" y2="432.5" stroke="#e6e6e6"/>
<line x1="1340" y1="425.5" x2="1702" y2="425.5" stroke="#e6e6e6"/>
<line x1="1340" y1="417.5" x2="1702" y2="417.5" stroke="#e6e6e6"/>
<line x1="1340" y1="409.5" x2="1702" y2="409.5" stroke="#e6e6e6"/>
<line x1="1340" y1="394.5" x2="1702" y2="394.5" stroke="#e6e6e6"/>
<line x1="1340" y1="386.5" x2="1702" y2="386.5" stroke="#e6e6e6"/>
<line x1="1340" y1="378.5" x2="1702" y2="378.5" stroke="#e6e6e6"/>
<line x1="1340" y1="371.5" x2="1702" y2="371.5" stroke="#e6e6e6"/>
<line x1="1340" y1="355.5" x2="1702" y2="355.5" stroke="#e6e6e6"/>
<line x1="1340" y1="348.5" x2="1702" y2="348.5" stroke="#e6e6e6"/>
<line x1="1340" y1="340.5" x2="1702" y2="340.5" stroke="#e6e6e6"/>
<line x1="1340" y1="332.5" x2="1702" y2="332.5" stroke="#e6e6e6"/>
<line x1="1340" y1="317.5" x2="1702" y2="317.5" stroke="#e6e6e6"/>
<line x1="1340" y1="309.5" x2="1702" y2="309.5" stroke="#e6e6e6"/>
<line x1="1340" y1="301.5" x2="1702" y2="301.5" stroke="#e6e6e6"/>
<line x1="1340" y1="294.5" x2="1702" y2="294.5" stroke="#e6e6e6"/>
<line x1="1340" y1="278.5" x2="1702" y2="278.5" stroke="#e6e6e6"/>
<line x1="1340" y1="270.5" x2="1702" y2="270.5" stroke="#e6e6e6"/>
<line x1="1340" y1="263.5" x2="1702" y2="263.5" stroke="#e6e6e6"/>
<line x1="1340" y1="255.5" x2="1702" y2="255.5" stroke="#e6e6e6"/>
<line x1="1340" y1="240.5" x2="1702" y2="240.5" stroke="#e6e6e6"/>
<line x1="1340" y1="232.5" x2="1702" y2="232.5" stroke="#e6e6e6"/>
<line x1="1340" y1="224.5" x2="1702" y2="224.5" stroke="#e6e6e6"/>
<line x1="1340" y1="216.5" x2="1702" y2="216.5" stroke="#e6e6e6"/>
<line x1="1340" y1="201.5" x2="1702" y2="201.5" stroke="#e6e6e6"/>
<line x1="1340" y1="193.5" x2="1702" y2="193.5" stroke="#e6e6e6"/>
<line x1="1340" y1="186.5" x2="1702" y2="186.5" stroke="#e6e6e6"/>
<line x1="1340" y1="178.5" x2="1702" y2="178.5" stroke="#e6e6e6"/>
<line x1="1340" y1="162.5" x2="1702" y2="162.5" stroke="#e6e6e6"/>
<line x1="1340" y1="155.5" x2="1702" y2="155.5" stroke="#e6e6e6"/>
<line x1="1340" y1="147.5" x2="1702" y2="147.5" stroke="#e6e6e6"/>
<line x1="1340" y1="139.5" x2="1702" y2="139.5" stroke="#e6e6e6"/>
<line x1="1340" y1="124.5" x2="1702" y2="124.5" stroke="#e6e6e6"/>
<line x1="1340" y1="116.5" x2="1702" y2="116.5" stroke="#e6e6e6"/>
<line x1="1340" y1="108.5" x2="1702" y2="108.5" stroke="#e6e6e6"/>
<line x1="1340" y1="101.5" x2="1702" y2="101.5" stroke="#e6e6e6"/>
<line x1="1340" y1="85.5" x2="1702" y2="85.5" stroke="#e6e6e6"/>
<line x1="1340" y1="78.5" x2="1702" y2="78.5" stroke="#e6e6e6"/>
<line x1="1340" y1="70.5" x2="1702" y2="70.5" stroke="#e6e6e6"/>
<line x1="1340" y1="62.5" x2="1702" y2="62.5" stroke="#e6e6e6"/>
<line x1="1402.5" y1="60" x2="1402.5" y2="719" stroke="#a0a0a0"/>
<line x1="1466.5" y1="60" x2="1466.5" y2="719" stroke="#a0a0a0"/>
<line x1="1530.5" y1="60" x2="1530.5" y2="719" stroke="#a0a0a0"/>
<line x1="1594.5" y1="60" x2="1594.5" y2="719" stroke="#a0a0a0"/>
<line x1="1657.5" y1="60" x2="1657.5" y2="719" stroke="#a0a0a0"/>
<line x1="1340" y1="710.5" x2="1702" y2="710.5" stroke="#a0a0a0"/>
<line x1="1340" y1="672.5" x2="1702" y2="672.5" stroke="#a0a0a0"/>
<line x1="1340" y1="633.5" x2="1702" y2="633.5" stroke="#a0a0a0"/>
<line x1="1340" y1="594.5" x2="1702" y2="594.5" stroke="#a0a0a0"/>
<line x1="1340" y1="556.5" x2="1702" y2="556.5" stroke="#a0a0a0"/>
<line x1="1340" y1="517.5" x2="1702" y2="517.5" stroke="#a0a0a0"/>
<line x1="1340" y1="479.5" x2="1702" y2="479.5" stroke="#a0a0a0"/>
<line x1="1340" y1="440.5" x2="1702" y2="440.5" stroke="#a0a0a0"/>
<line x1="1340" y1="402.5" x2="1702" y2="402.5" stroke="#a0a0a0"/>
<line x1="1340" y1="363.5" x2="1702" y2="363.5" stroke="#a0a0a0"/>
<line x1="1340" y1="324.5" x2="1702" y2="324.5" stroke="#a0a0a0"/>
<line x1="1340" y1="286.5" x2="1702" y2="286.5" stroke="#a0a0a0"/>
<line x1="1340" y1="247.5" x2="1702" y2="247.5" stroke="#a0a0a0"/>
<line x1="1340" y1="209.5" x2="1702" y2="209.5" stroke="#a0a0a0"/>
<line x1="1340" y1="170.5" x2="1702" y2="170.5" stroke="#a0a0a0"/>
<line x1="1340" y1="132.5" x2="1702" y2="132.5" stroke="#a0a0a0"/>
<line x1="1340" y1="93.5" x2="1702" y2="93.5" stroke="#a0a0a0"/>
<rect x="1351" y="60" width="1" height="1" fill="#000"/>
<rect x="1351" y="718" width="1" height="1" fill="#000"/>
<rect x="1364" y="60" width="1" height="1" fill="#000"/>
<rect x="1364" y="718" width="1" height="1" fill="#000"/>
<rect x="1377" y="60" width="1" height="1" fill="#000"/>
<rect x="1377" y="718" width="1" height="1" fill="#000"/>
<rect x="1390" y="60" width="1" height="1" fill="#000"/>
<rect x="1390" y="718" width="1" height="1" fill="#000"/>
<rect x="1402" y="60" width="1" height="3" fill="#000"/>
<rect x="1402" y="716" width="1" height="3" fill="#000"/>
<rect x="1415" y="60" width="1" height="1" fill="#000"/>
<rect x="1415" y="718" width="1" height="1" fill="#000"/>
<rect x="1428" y="60" width="1" height="1" fill="#000"/>
<rect x="1428" y="718" width="1" height="1" fill="#000"/>
<rect x="1441" y="60" width="1" height="1" fill="#000"/>
<rect x="1441" y="718" width="1" height="1" fill="#000"/>
<rect x="1453" y="60" width="1" height="1" fill="#000"/>
<rect x="1453" y="718" width="1" height="1" fill="#000"/>
<rect x="1466" y="60" width="1" height="3" fill="#000"/>
<rect x="1466" y="716" width="1" height="3" fill="#000"/>
<rect x="1479" y="60" width="1" height="1" fill="#000"/>
<rect x="1479" y="718" width="1" height="1" fill="#000"/>
<rect x="1492" y="60" width="1" height="1" fill="#000"/>
<rect x="1492" y="718" width="1" height="1" fill="#000"/>
<rect x="1504" y="60" width="1" height="1" fill="#000"/>
<rect x="1504" y="718" width="1" height="1" fill="#000"/>
<rect x="1517" y="60" width="1" height="1" fill="#000"/>
<rect x="1517" y="718" width="1" height="1" fill="#000"/>
<rect x="1530" y="60" width="1" height="3" fill="#000"/>
<rect x="1530" y="716" width="1" height="3" fill="#000"/>
<rect x="1543" y="60" width="1" height="1" fill="#000"/>
<rect x="1543" y="718" width="1" height="1" fill="#000"/>
<rect x="1555" y="60" width="1" height="1" fill="#000"/>
<rect x="1555" y="718" width="1" height="1" fill="#000"/>
<rect x="1568" y="60" width="1" height="1" fill="#000"/>
<rect x="1568" y="718" width="1" height="1" fill="#000"/>
<rect x="1581" y="60" width="1" height="1" fill="#000"/>
<rect x="1581" y="718" width="1" height="1" fill="#000"/>
<rect x="1594" y="60" width="1" height="3" fill="#000"/>
<rect x="1594" y="716" width="1" height="3" fill="#000"/>
<rect x="1606" y="60" width="1" height="1" fill="#000"/>
<rect x="1606" y="718" width="1" height="1" fill="#000"/>
<rect x="1619" y="60" width="1" height="1" fill="#000"/>
<rect x="1619" y="718" width="1" height="1" fill="#000"/>
<rect x="1632" y="60" width="1" height="1" fill="#000"/>
<rect x="1632" y="718" width="1" height="1" fill="#000"/>
<rect x="1645" y="60" width="1" height="1" fill="#000"/>
<rect x="1645" y="718" width="1" height="1" fill="#000"/>
<rect x="1657" y="60" width="1" height="3" fill="#000"/>
<rect x="1657" y="716" width="1" height="3" fill="#000"/>
<rect x="1670" y="60" width="1" height="1" fill="#000"/>
<rect x="1670" y="718" width="1" height="1" fill="#000"/>
<rect x="1683" y="60" width="1" height="1" fill="#000"/>
<rect x="1683" y="718" width="1" height="1" fill="#000"/>
<rect x="1696" y="60" width="1" height="1" fill="#000"/>
<rect x="1696" y="718" width="1" height="1" fill="#000"/>
<rect x="1340" y="718" width="1" height="1" fill="#000"/>
<rect x="1340" y="710" width="3" height="1" fill="#000"/>
<rect x="1340" y="702" width="1" height="1" fill="#000"/>
<rect x="1340" y="695" width="1" height="1" fill="#000"/>
<rect x="1340" y="687" width="1" height="1" fill="#000"/>
<rect x="1340" y="679" width="1" height="1" fill="#000"/>
<rect x="1340" y="672" width="3" height="1" fill="#000"/>
<rect x="1340" y="664" width="1" height="1" fill="#000"/>
<rect x="1340" y="656" width="1" height="1" fill="#000"/>
<rect x="1340" y="648" width="1" height="1" fill="#000"/>
<rect x="1340" y="641" width="1" height="1" fill="#000"/>
<rect x="1340" y="633" width="3" height="1" fill="#000"/>
<rect x="1340" y="625" width="1" height="1" fill="#000"/>
<rect x="1340" y="618" width="1" height="1" fill="#000"/>
<rect x="1340" y="610" width="1" height="1" fill="#000"/>
<rect x="1340" y="602" width="1" height="1" fill="#000"/>
<rect x="1340" y="594" width="3" height="1" fill="#000"/>
<rect x="1340" y="587" width="1" height="1" fill="#000"/>
<rect x="1340" y="579" width="1" height="1" fill="#000"/>
<rect x="1340" y="571" width="1" height="1" fill="#000"/>
<rect x="1340" y="564" width="1" height="1" fill="#000"/>
<rect x="1340" y="556" width="3" height="1" fill="#000"/>
<rect x="1340" y="548" width="1" height="1" fill="#000"/>
<rect x="1340" y="540" width="1" height="1" fill="#000"/>
<rect x="1340" y="533" width="1" height="1" fill="#000"/>
<rect x="1340" y="525" width="1" height="1" fill="#000"/>
<rect x="1340" y="517" width="3" height="1" fill="#000"/>
<rect x="1340" y="510" width="1" height="1" fill="#000"/>
<rect x="1340" y="502" width="1" height="1" fill="#000"/>
<rect x="1340" y="494" width="1" height="1" fill="#000"/>
<rect x="1340" y="486" width="1" height="1" fill="#000"/>
<rect x="1340" y="479" width="3" height="1" fill="#000"/>
<rect x="1340" y="471" width="1" height="1" fill="#000"/>
<rect x="1340" y="463" width="1" height="1" fill="#000"/>
<rect x="1340" y="456" width="1" height="1" fill="#000"/>
<rect x="1340" y="448" width="1" height="1" fill="#000"/>
<rect x="1340" y="440" width="3" height="1" fill="#000"/>
<rect x="1340" y="432" width="1" height="1" fill="#000"/>
<rect x="1340" y="425" width="1" height="1" fill="#000"/>
<rect x="1340" y="417" width="1" height="1" fill="#000"/>
<rect x="1340" y="409" width="1" height="1" fill="#000"/>
<rect x="1340" y="402" width="3" height="1" fill="#000"/>
<rect x="1340" y="394" width="1" height="1" fill="#000"/>
<rect x="1340" y="386" width="1" height="1" fill="#000"/>
<rect x="1340" y="378" width="1" height="1" fill="#000"/>
<rect x="1340" y="371" width="1" height="1" fill="#000"/>
<rect x="1340" y="363" width="3" height="1" fill="#000"/>
<rect x="1340" y="355" width="1" height="1" fill="#000"/>
<rect x="1340" y="348" width="1" height="1" fill="#000"/>
<rect x="1340" y="340" width="1" height="1" fill="#000"/>
<rect x="1340" y="332" width="1" height="1" fill="#000"/>
<rect x="1340" y="324" width="3" height="1" fill="#000"/>
<rect x="1340" y="317" width="1" height="1" fill="#000"/>
<rect x="1340" y="309" width="1" height="1" fill="#000"/>
<rect x="1340" y="301" width="1" height="1" fill="#000"/>
<rect x="1340" y="294" width="1" height="1" fill="#000"/>
<rect x="1340" y="286" width="3" height="1" fill="#000"/>
<rect x="1340" y="278" width="1" height="1" fill="#000"/>
<rect x="1340" y="270" width="1" height="1" fill="#000"/>
<rect x="1340" y="263" width="1" height="1" fill="#000"/>
<rect x="1340" y="255" width="1" height="1" fill="#000"/>
<rect x="1340" y="247" width="3" height="1" fill="#000"/>
<rect x="1340" y="240" width="1" height="1" fill="#000"/>
<rect x="1340" y="232" width="1" height="1" fill="#000"/>
<rect x="1340" y="224" width="1" height="1" fill="#000"/>
<rect x="1340" y="216" width="1" height="1" fill="#000"/>
<rect x="1340" y="209" width="3" height="1" fill="#000"/>
<rect x="1340" y="201" width="1" height="1" fill="#000"/>
<rect x="1340" y="193" width="1" height="1" fill="#000"/>
<rect x="1340" y="186" width="1" height="1" fill="#000"/>
<rect x="1340" y="178" width="1" height="1" fill="#000"/>
<rect x="1340" y="170" width="3" height="1" fill="#000"/>
<rect x="1340" y="162" width="1" height="1" fill="#000"/>
<rect x="1340" y="155" width="1" height="1" fill="#000"/>
<rect x="1340" y="147" width="1" height="1" fill="#000"/>
<rect x="1340" y="139" width="1" height="1" fill="#000"/>
<rect x="1340" y="132" width="3" height="1" fill="#000"/>
<rect x="1340" y="124" width="1" height="1" fill="#000"/>
<rect x="1340" y="116" width="1" height="1" fill="#000"/>
<rect x="1340" y="108" width="1" height="1" fill="#000"/>
<rect x="1340" y="101" width="1" height="1" fill="#000"/>
<rect x="1340" y="93" width="3" height="1" fill="#000"/>
<rect x="1340" y="85" width="1" height="1" fill="#000"/>
<rect x="1340" y="78" width="1" height="1" fill="#000"/>
<rect x="1340" y="70" width="1" height="1" fill="#000"/>
<rect x="1340" y="62" width="1" height="1" fill="#000"/>
</g>
<g clip-path="url(#cl)">
<polyline fill="none" stroke="#000" stroke-width="2" stroke-linejoin="miter" points="1362.0,633.0 1406.7,633.0 1407.0,626.1 1407.8,607.5 1408.5,587.5 1409.3,548.2 1410.3,549.0 1410.8,563.0 1411.6,577.9 1413.0,588.2 1414.8,588.2 1415.6,567.5 1417.0,551.9 1417.8,520.0 1418.3,473.0 1419.0,418.0 1419.5,343.0 1420.8,244.0 1422.2,146.5 1423.0,146.5 1423.9,236.0 1424.6,331.0 1425.2,430.0 1426.5,517.0 1426.8,527.4 1428.2,554.9 1429.7,584.5 1430.4,595.7 1431.9,607.5 1434.1,617.9 1437.1,626.8 1441.5,630.5 1450.4,632.8 1680.0,633.0"/>
<rect x="1361" y="59" width="2" height="661" fill="#0000ff"/>
<path d="M1363 86.0 L1366 88.6 L1363 91.2 Z" fill="#0000ff"/>
<path d="M1363 116.0 L1366 118.6 L1363 121.2 Z" fill="#0000ff"/>
<path d="M1363 146.0 L1366 148.6 L1363 151.2 Z" fill="#0000ff"/>
<path d="M1363 176.0 L1366 178.6 L1363 181.2 Z" fill="#0000ff"/>
<path d="M1363 206.0 L1366 208.6 L1363 211.2 Z" fill="#0000ff"/>
<path d="M1363 236.0 L1366 238.6 L1363 241.2 Z" fill="#0000ff"/>
<path d="M1363 266.0 L1366 268.6 L1363 271.2 Z" fill="#0000ff"/>
<path d="M1363 296.0 L1366 298.6 L1363 301.2 Z" fill="#0000ff"/>
<path d="M1363 326.0 L1366 328.6 L1363 331.2 Z" fill="#0000ff"/>
<path d="M1363 356.0 L1366 358.6 L1363 361.2 Z" fill="#0000ff"/>
<path d="M1363 386.0 L1366 388.6 L1363 391.2 Z" fill="#0000ff"/>
<path d="M1363 416.0 L1366 418.6 L1363 421.2 Z" fill="#0000ff"/>
<path d="M1363 446.0 L1366 448.6 L1363 451.2 Z" fill="#0000ff"/>
<path d="M1363 476.0 L1366 478.6 L1363 481.2 Z" fill="#0000ff"/>
<path d="M1363 506.0 L1366 508.6 L1363 511.2 Z" fill="#0000ff"/>
<path d="M1363 536.0 L1366 538.6 L1363 541.2 Z" fill="#0000ff"/>
<path d="M1363 566.0 L1366 568.6 L1363 571.2 Z" fill="#0000ff"/>
<path d="M1363 596.0 L1366 598.6 L1363 601.2 Z" fill="#0000ff"/>
<path d="M1363 626.0 L1366 628.6 L1363 631.2 Z" fill="#0000ff"/>
<path d="M1363 656.0 L1366 658.6 L1363 661.2 Z" fill="#0000ff"/>
<path d="M1363 686.0 L1366 688.6 L1363 691.2 Z" fill="#0000ff"/>
<path d="M1363 716.0 L1366 718.6 L1363 721.2 Z" fill="#0000ff"/>
<rect x="1679" y="59" width="2" height="661" fill="#0000ff"/>
<path d="M1679 86.0 L1676 88.6 L1679 91.2 Z" fill="#0000ff"/>
<path d="M1679 116.0 L1676 118.6 L1679 121.2 Z" fill="#0000ff"/>
<path d="M1679 146.0 L1676 148.6 L1679 151.2 Z" fill="#0000ff"/>
<path d="M1679 176.0 L1676 178.6 L1679 181.2 Z" fill="#0000ff"/>
<path d="M1679 206.0 L1676 208.6 L1679 211.2 Z" fill="#0000ff"/>
<path d="M1679 236.0 L1676 238.6 L1679 241.2 Z" fill="#0000ff"/>
<path d="M1679 266.0 L1676 268.6 L1679 271.2 Z" fill="#0000ff"/>
<path d="M1679 296.0 L1676 298.6 L1679 301.2 Z" fill="#0000ff"/>
<path d="M1679 326.0 L1676 328.6 L1679 331.2 Z" fill="#0000ff"/>
<path d="M1679 356.0 L1676 358.6 L1679 361.2 Z" fill="#0000ff"/>
<path d="M1679 386.0 L1676 388.6 L1679 391.2 Z" fill="#0000ff"/>
<path d="M1679 416.0 L1676 418.6 L1679 421.2 Z" fill="#0000ff"/>
<path d="M1679 446.0 L1676 448.6 L1679 451.2 Z" fill="#0000ff"/>
<path d="M1679 476.0 L1676 478.6 L1679 481.2 Z" fill="#0000ff"/>
<path d="M1679 506.0 L1676 508.6 L1679 511.2 Z" fill="#0000ff"/>
<path d="M1679 536.0 L1676 538.6 L1679 541.2 Z" fill="#0000ff"/>
<path d="M1679 566.0 L1676 568.6 L1679 571.2 Z" fill="#0000ff"/>
<path d="M1679 596.0 L1676 598.6 L1679 601.2 Z" fill="#0000ff"/>
<path d="M1679 626.0 L1676 628.6 L1679 631.2 Z" fill="#0000ff"/>
<path d="M1679 656.0 L1676 658.6 L1679 661.2 Z" fill="#0000ff"/>
<path d="M1679 686.0 L1676 688.6 L1679 691.2 Z" fill="#0000ff"/>
<path d="M1679 716.0 L1676 718.6 L1679 721.2 Z" fill="#0000ff"/>
</g>
<rect x="1339.5" y="59.5" width="363" height="660" fill="none" stroke="#000" shape-rendering="crispEdges"/>
</svg>
<div style="position:absolute;left:1362.4px;top:721px;width:80px;text-align:center;font:16px 'Liberation Sans', sans-serif;line-height:18px;color:#000;white-space:pre;transform:scaleX(1.06)">0</div>
<div style="position:absolute;left:1426.15px;top:721px;width:80px;text-align:center;font:16px 'Liberation Sans', sans-serif;line-height:18px;color:#000;white-space:pre;transform:scaleX(1.06)">10</div>
<div style="position:absolute;left:1489.9px;top:721px;width:80px;text-align:center;font:16px 'Liberation Sans', sans-serif;line-height:18px;color:#000;white-space:pre;transform:scaleX(1.06)">20</div>
<div style="position:absolute;left:1553.65px;top:721px;width:80px;text-align:center;font:16px 'Liberation Sans', sans-serif;line-height:18px;color:#000;white-space:pre;transform:scaleX(1.06)">30</div>
<div style="position:absolute;left:1617.4px;top:721px;width:80px;text-align:center;font:16px 'Liberation Sans', sans-serif;line-height:18px;color:#000;white-space:pre;transform:scaleX(1.06)">40</div>
<div style="position:absolute;left:1249px;top:701.64px;width:88px;text-align:right;font:16px 'Liberation Sans', sans-serif;line-height:18px;color:#000;white-space:pre;transform:scaleX(1.04);transform-origin:100% 0">-20</div>
<div style="position:absolute;left:1249px;top:663.07px;width:88px;text-align:right;font:16px 'Liberation Sans', sans-serif;line-height:18px;color:#000;white-space:pre;transform:scaleX(1.04);transform-origin:100% 0">-10</div>
<div style="position:absolute;left:1249px;top:624.5px;width:88px;text-align:right;font:16px 'Liberation Sans', sans-serif;line-height:18px;color:#000;white-space:pre;transform:scaleX(1.04);transform-origin:100% 0">0</div>
<div style="position:absolute;left:1249px;top:585.93px;width:88px;text-align:right;font:16px 'Liberation Sans', sans-serif;line-height:18px;color:#000;white-space:pre;transform:scaleX(1.04);transform-origin:100% 0">10</div>
<div style="position:absolute;left:1249px;top:547.36px;width:88px;text-align:right;font:16px 'Liberation Sans', sans-serif;line-height:18px;color:#000;white-space:pre;transform:scaleX(1.04);transform-origin:100% 0">20</div>
<div style="position:absolute;left:1249px;top:508.78999999999996px;width:88px;text-align:right;font:16px 'Liberation Sans', sans-serif;line-height:18px;color:#000;white-space:pre;transform:scaleX(1.04);transform-origin:100% 0">30</div>
<div style="position:absolute;left:1249px;top:470.22px;width:88px;text-align:right;font:16px 'Liberation Sans', sans-serif;line-height:18px;color:#000;white-space:pre;transform:scaleX(1.04);transform-origin:100% 0">40</div>
<div style="position:absolute;left:1249px;top:431.65px;width:88px;text-align:right;font:16px 'Liberation Sans', sans-serif;line-height:18px;color:#000;white-space:pre;transform:scaleX(1.04);transform-origin:100% 0">50</div>
<div style="position:absolute;left:1249px;top:393.08px;width:88px;text-align:right;font:16px 'Liberation Sans', sans-serif;line-height:18px;color:#000;white-space:pre;transform:scaleX(1.04);transform-origin:100% 0">60</div>
<div style="position:absolute;left:1249px;top:354.51px;width:88px;text-align:right;font:16px 'Liberation Sans', sans-serif;line-height:18px;color:#000;white-space:pre;transform:scaleX(1.04);transform-origin:100% 0">70</div>
<div style="position:absolute;left:1249px;top:315.94px;width:88px;text-align:right;font:16px 'Liberation Sans', sans-serif;line-height:18px;color:#000;white-space:pre;transform:scaleX(1.04);transform-origin:100% 0">80</div>
<div style="position:absolute;left:1249px;top:277.37px;width:88px;text-align:right;font:16px 'Liberation Sans', sans-serif;line-height:18px;color:#000;white-space:pre;transform:scaleX(1.04);transform-origin:100% 0">90</div>
<div style="position:absolute;left:1249px;top:238.79999999999995px;width:88px;text-align:right;font:16px 'Liberation Sans', sans-serif;line-height:18px;color:#000;white-space:pre;transform:scaleX(1.04);transform-origin:100% 0">100</div>
<div style="position:absolute;left:1249px;top:200.22999999999996px;width:88px;text-align:right;font:16px 'Liberation Sans', sans-serif;line-height:18px;color:#000;white-space:pre;transform:scaleX(1.04);transform-origin:100% 0">110</div>
<div style="position:absolute;left:1249px;top:161.65999999999997px;width:88px;text-align:right;font:16px 'Liberation Sans', sans-serif;line-height:18px;color:#000;white-space:pre;transform:scaleX(1.04);transform-origin:100% 0">120</div>
<div style="position:absolute;left:1249px;top:123.08999999999997px;width:88px;text-align:right;font:16px 'Liberation Sans', sans-serif;line-height:18px;color:#000;white-space:pre;transform:scaleX(1.04);transform-origin:100% 0">130</div>
<div style="position:absolute;left:1249px;top:84.51999999999998px;width:88px;text-align:right;font:16px 'Liberation Sans', sans-serif;line-height:18px;color:#000;white-space:pre;transform:scaleX(1.04);transform-origin:100% 0">140</div>
<div style="position:absolute;left:1345px;top:39px;width:300px;text-align:center;font:bold 16px 'Liberation Sans', sans-serif;line-height:18px;color:#000;white-space:pre;transform:scaleX(1.02)">Lifetime Histogram</div>
<div style="position:absolute;left:1370px;top:742px;width:300px;text-align:center;font:16px 'Liberation Sans', sans-serif;line-height:18px;color:#000;white-space:pre;transform:scaleX(1.03)">Lifetime [ns]</div>
<svg style="position:absolute;left:0;top:0" width="1920" height="809"><g transform="translate(1302.5,460.3) rotate(-90)" font-family="Liberation Sans" font-size="16" fill="#000"><text x="-0.8" y="0" textLength="69" lengthAdjust="spacingAndGlyphs">Occur. [10</text><text x="77" y="-6" font-size="10.5">3</text><text x="88.3" y="0" textLength="49.8" lengthAdjust="spacingAndGlyphs">Events]</text></g></svg>
</body></html>
